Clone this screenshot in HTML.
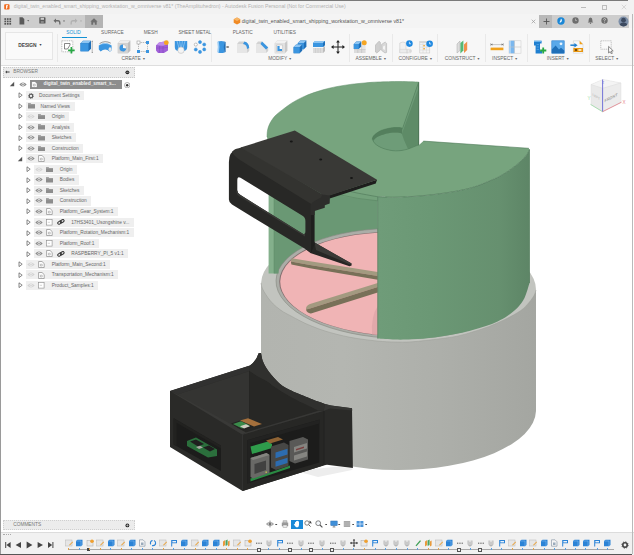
<!DOCTYPE html>
<html><head><meta charset="utf-8"><title>Fusion</title>
<style>
html,body{margin:0;padding:0;}
body{width:634px;height:555px;overflow:hidden;background:#fff;position:relative;font-family:"Liberation Sans",sans-serif;}
.ab{position:absolute;display:block;}
.t{position:absolute;white-space:nowrap;line-height:1;}
.rbg{position:absolute;height:9.2px;background:#efefef;}
.rt{position:absolute;height:9.2px;line-height:10.4px;font-size:4.8px;color:#666;background:#efefef;padding:0 4.5px 0 2px;white-space:nowrap;}
.lbl{position:absolute;font-size:4.9px;color:#666;white-space:nowrap;line-height:6px;transform:translateX(-50%);}
.tab{position:absolute;font-size:4.8px;color:#666;white-space:nowrap;line-height:6px;top:29.5px;}
.sep{position:absolute;top:34px;height:28px;width:1px;background:#e9e9e9;}
</style></head><body>
<!-- window border -->
<div class="ab" style="left:0;top:0;width:634px;height:555px;background:#fff"></div>
<!-- title bar -->
<div class="ab" style="left:0;top:0;width:634px;height:14px;background:#f2f2f2"></div>
<div class="ab" style="left:0;top:0;width:628px;height:1px;background:#7a7a7a"></div>
<svg class="ab" style="left:4px;top:3.6px" width="6" height="6" viewBox="0 0 9 9"><rect x="0.3" y="0.3" width="8" height="8" rx="1.2" fill="#f26a1b"/><path d="M3 2H6V3.2H4.3V4.2H5.6V5.3H4.3V7H3Z" fill="#fff"/></svg>
<div class="t" style="left:13.8px;top:4.2px;font-size:5.2px;color:#b2b2b2">digital_twin_enabled_smart_shipping_workstation_w_omniverse v81* (TheAmplituhedron) - Autodesk Fusion Personal (Not for Commercial Use)</div>
<!-- window controls -->
<div class="ab" style="left:581px;top:6.6px;width:5px;height:0.6px;background:#bbb"></div>
<div class="ab" style="left:601.6px;top:4.6px;width:3.2px;height:3.2px;border:0.6px solid #bdbdbd"></div>
<svg class="ab" style="left:621px;top:4px" width="6" height="6" viewBox="0 0 6 6"><path d="M0.8 0.8L5.2 5.2M5.2 0.8L0.8 5.2" stroke="#c4c4c4" stroke-width="0.6"/></svg>
<!-- app bar -->
<div class="ab" style="left:0;top:14px;width:634px;height:14px;background:#f4f4f4"></div>
<div class="ab" style="left:0;top:14.5px;width:103px;height:13px;background:#cdcdcd"></div>
<div class="ab" style="left:85px;top:14.5px;width:18px;height:13px;background:#b4b4b4"></div>
<div class="ab" style="left:539.3px;top:15px;width:90px;height:12.5px;background:#cdcdcd"></div>
<div class="ab" style="left:539.3px;top:15px;width:13px;height:12.5px;background:#b9b9b9"></div>
<!-- app bar icons -->
<svg class="ab" style="left:3.5px;top:17.5px" width="8" height="7" viewBox="0 0 8 7"><g fill="#555"><rect x="0.4" y="0.2" width="1.7" height="1.7"/><rect x="2.9" y="0.2" width="1.7" height="1.7"/><rect x="5.4" y="0.2" width="1.7" height="1.7"/><rect x="0.4" y="2.6" width="1.7" height="1.7"/><rect x="2.9" y="2.6" width="1.7" height="1.7"/><rect x="5.4" y="2.6" width="1.7" height="1.7"/><rect x="0.4" y="5" width="1.7" height="1.7"/><rect x="2.9" y="5" width="1.7" height="1.7"/><rect x="5.4" y="5" width="1.7" height="1.7"/></g></svg>
<svg class="ab" style="left:18.5px;top:17px" width="12" height="8" viewBox="0 0 12 8"><path d="M0.5 0.3H3.5L5.3 2V7.5H0.5Z" fill="#5a5a5a"/><path d="M8.2 3L10.2 3L9.2 4.4Z" fill="#666"/></svg>
<svg class="ab" style="left:38.5px;top:17.3px" width="7" height="7" viewBox="0 0 7 7"><rect x="0.3" y="0.3" width="6.2" height="6.2" rx="0.6" fill="#5a5a5a"/><rect x="1.6" y="0.8" width="3.4" height="2" fill="#cdcdcd"/><rect x="1.8" y="4" width="3" height="2" fill="#888"/></svg>
<svg class="ab" style="left:52.5px;top:17.5px" width="14" height="7" viewBox="0 0 14 7"><path d="M0.5 2.8L3 0.5V2H5Q7.5 2 7.5 5V6.5H6.2V5Q6.2 3.6 5 3.6H3V5.1Z" fill="#6a6a6a"/><path d="M10 2.6H12L11 4Z" fill="#666"/></svg>
<svg class="ab" style="left:69.5px;top:17.5px" width="14" height="7" viewBox="0 0 14 7"><path d="M7.5 2.8L5 0.5V2H3Q0.5 2 0.5 5V6.5H1.8V5Q1.8 3.6 3 3.6H5V5.1Z" fill="#b0b0b0"/><path d="M10 2.6H12L11 4Z" fill="#aaa"/></svg>
<svg class="ab" style="left:90px;top:17.6px" width="8" height="7" viewBox="0 0 8 7"><path d="M4 0.3L7.6 3.4H6.7V6.7H4.8V4.4H3.2V6.7H1.3V3.4H0.4Z" fill="#6e6e6e"/></svg>
<!-- tab -->
<svg class="ab" style="left:232.5px;top:17.3px" width="8" height="8" viewBox="0 0 8 8"><path d="M4 0.4L7.3 2.2V5.8L4 7.6L0.7 5.8V2.2Z" fill="#f08a24"/><path d="M4 0.4L7.3 2.2L4 4L0.7 2.2Z" fill="#f7b566"/></svg>
<div class="t" style="left:241.7px;top:18.6px;font-size:5.29px;color:#555">digital_twin_enabled_smart_shipping_workstation_w_omniverse v81*</div>
<svg class="ab" style="left:531.2px;top:18.6px" width="5" height="5" viewBox="0 0 5 5"><path d="M0.7 0.7L4.3 4.3M4.3 0.7L0.7 4.3" stroke="#999" stroke-width="0.7"/></svg>
<svg class="ab" style="left:543.2px;top:17.5px" width="7" height="7" viewBox="0 0 7 7"><path d="M3.5 0.5V6.5M0.5 3.5H6.5" stroke="#555" stroke-width="0.9"/></svg>
<svg class="ab" style="left:557.3px;top:16.8px" width="8" height="8" viewBox="0 0 8 8"><circle cx="4" cy="4" r="3.7" fill="#1b87d6"/><path d="M4 1.5Q5.6 3 4.6 4.6Q3.6 6 2.4 5.2Q3.6 4 4 1.5Z" fill="#fff"/></svg>
<svg class="ab" style="left:572px;top:17.3px" width="7" height="7" viewBox="0 0 7 7"><circle cx="3.5" cy="3.5" r="3.2" fill="#6e6e6e"/><path d="M3.5 1.6V3.6H5" stroke="#ccc" stroke-width="0.6" fill="none"/></svg>
<svg class="ab" style="left:586.5px;top:17.3px" width="7" height="7" viewBox="0 0 7 7"><path d="M3.5 0.5Q5.4 0.8 5.4 3.2V4.6L6.3 5.6H0.7L1.6 4.6V3.2Q1.6 0.8 3.5 0.5Z" fill="#6e6e6e"/><circle cx="3.5" cy="6.2" r="0.7" fill="#6e6e6e"/></svg>
<svg class="ab" style="left:600.8px;top:17.3px" width="7" height="7" viewBox="0 0 7 7"><circle cx="3.5" cy="3.5" r="3.2" fill="#6e6e6e"/><path d="M2.5 2.6Q2.6 1.6 3.5 1.6Q4.5 1.6 4.5 2.5Q4.5 3.2 3.5 3.6V4.3" stroke="#ddd" stroke-width="0.7" fill="none"/><circle cx="3.5" cy="5.3" r="0.45" fill="#ddd"/></svg>
<svg class="ab" style="left:617.5px;top:15.8px" width="11" height="11" viewBox="0 0 11 11"><defs><clipPath id="av"><circle cx="5.5" cy="5.5" r="5"/></clipPath></defs><circle cx="5.5" cy="5.5" r="5" fill="#7d8fa8"/><g clip-path="url(#av)"><circle cx="5.5" cy="4.2" r="2.4" fill="#3c4a60"/><path d="M1 11Q1.5 6.6 5.5 6.6Q9.5 6.6 10 11Z" fill="#3c4a60"/></g></svg>
<!-- toolbar -->
<div class="ab" style="left:0;top:28px;width:634px;height:37.5px;background:#f7f7f7"></div>
<div class="ab" style="left:0;top:65px;width:634px;height:1px;background:#dedede"></div>
<div class="ab" style="left:5px;top:32px;width:48px;height:28px;background:#fafafa;border:0.5px solid #e6e6e6;box-sizing:border-box"></div>
<div class="t" style="left:18.3px;top:43.6px;font-size:4.9px;color:#444;font-weight:bold;letter-spacing:-0.1px">DESIGN <span style="font-size:3.5px;position:relative;top:-0.5px;left:1px">&#9660;</span></div>
<div class="tab" style="left:66.3px;color:#1492d4">SOLID</div>
<div class="ab" style="left:61.5px;top:36.5px;width:25px;height:1.2px;background:#1492d4"></div>
<div class="tab" style="left:101px">SURFACE</div>
<div class="tab" style="left:143.8px">MESH</div>
<div class="tab" style="left:178.4px">SHEET METAL</div>
<div class="tab" style="left:232.7px">PLASTIC</div>
<div class="tab" style="left:273.6px">UTILITIES</div>
<svg class="ab" style="left:61.0px;top:39.8px" width="14" height="14" viewBox="0 0 14 14"><rect x="0.8" y="0.8" width="11" height="11" fill="#fff" stroke="#888" stroke-width="0.6" stroke-dasharray="1 0.8"/><path d="M3.5 9V3.5H9L9 5L6.5 9Z" fill="none" stroke="#555" stroke-width="0.7"/><path d="M10.4 7V13.6M7.1 10.3H13.7" stroke="#27a844" stroke-width="1.7"/></svg>
<svg class="ab" style="left:79.0px;top:39.8px" width="14" height="14" viewBox="0 0 14 14"><path d="M1.5 3.3L4.0 0.8H12.0V8.8L9.5 11.3H1.5Z" fill="#1f6fb8"/><path d="M1.5 3.3L4.0 0.8H12.0L9.5 3.3Z" fill="#8cc4f2"/><path d="M1.5 3.3H9.5V11.3H1.5Z" fill="#3a95e0"/><path d="M13.2 1V12.5" stroke="#777" stroke-width="0.5"/><path d="M12.6 1.6L13.2 0.6L13.8 1.6ZM12.6 12L13.2 13L13.8 12Z" fill="#555"/></svg>
<svg class="ab" style="left:98.3px;top:39.8px" width="14" height="14" viewBox="0 0 14 14"><path d="M0.8 5.5Q7 0.5 13.6 5.5V10Q13.4 11.6 11.6 11.4Q7 7.6 2.6 11.6L0.8 9.6Z" fill="#3a95e0"/><path d="M0.8 5.5Q7 0.5 13.6 5.5Q7 2.6 0.8 5.5Z" fill="#9ccdf5"/><path d="M1.5 3.6Q7 0 12.8 3.2" fill="none" stroke="#555" stroke-width="0.6"/><ellipse cx="12" cy="9.2" rx="1.4" ry="1.9" fill="#e8e8e8"/></svg>
<svg class="ab" style="left:117.0px;top:39.8px" width="14" height="14" viewBox="0 0 14 14"><path d="M0.8 3.1L3.3 0.6H13.4V10.7L10.9 13.2H0.8Z" fill="#bdbdbd"/><path d="M0.8 3.1L3.3 0.6H13.4L10.9 3.1Z" fill="#ededed"/><path d="M0.8 3.1H10.9V13.2H0.8Z" fill="#d4d4d4"/><circle cx="6" cy="8" r="3.6" fill="#f6f6f6" stroke="#aaa" stroke-width="0.5"/><path d="M6 4.6A3.4 3.4 0 1 0 9.3 8.6L6 8Z" fill="#3a95e0"/></svg>
<svg class="ab" style="left:135.6px;top:39.8px" width="14" height="14" viewBox="0 0 14 14"><path d="M2.5 2.5H11.5V11.5H2.5Z" fill="none" stroke="#888" stroke-width="0.6" stroke-dasharray="1.2 0.9"/><rect x="1" y="1" width="3" height="3" fill="#fff" stroke="#888" stroke-width="0.5"/><rect x="10" y="1" width="3" height="3" fill="#3a95e0"/><rect x="1" y="10" width="3" height="3" fill="#3a95e0"/><rect x="10" y="10" width="3" height="3" fill="#3a95e0"/></svg>
<svg class="ab" style="left:155.0px;top:39.8px" width="14" height="14" viewBox="0 0 14 14"><path d="M1 5.5L4 2.5L9.5 1.5L13 4.5V10.5L9 13H3L1 10.5Z" fill="#a060d8"/><path d="M1 5.5L4 2.5L9.5 1.5L13 4.5L8 6.2Z" fill="#c08cec"/><path d="M8 6.2V13M1 5.5L8 6.2L13 4.5M4.5 6V12.8M1 8H8L13 7.2" stroke="#7a3fb8" stroke-width="0.4" fill="none"/><circle cx="11.3" cy="2.7" r="2.4" fill="#f5a623"/></svg>
<svg class="ab" style="left:174.0px;top:39.8px" width="14" height="14" viewBox="0 0 14 14"><path d="M0.8 1H13.2V7Q13.2 10.5 10 11H4Q0.8 10.5 0.8 7Z" fill="#3a95e0"/><path d="M3 1L5 8M5.6 1L6.4 7M8.4 1L7.6 7M11 1L9 8" stroke="#9ccdf5" stroke-width="0.7"/><ellipse cx="7" cy="10.2" rx="3.2" ry="3.2" fill="#f4f4f4" stroke="#b5b5b5" stroke-width="0.5"/></svg>
<svg class="ab" style="left:192.6px;top:39.8px" width="14" height="14" viewBox="0 0 14 14"><circle cx="7.0" cy="2.1" r="1.55" fill="#3a95e0" stroke="#3a95e0" stroke-width="0.5"/><circle cx="11.2" cy="4.5" r="1.55" fill="#3a95e0" stroke="#3a95e0" stroke-width="0.5"/><circle cx="11.2" cy="9.4" r="1.55" fill="#3a95e0" stroke="#3a95e0" stroke-width="0.5"/><circle cx="7.0" cy="11.9" r="1.55" fill="#3a95e0" stroke="#3a95e0" stroke-width="0.5"/><circle cx="2.8" cy="9.5" r="1.55" fill="#3a95e0" stroke="#3a95e0" stroke-width="0.5"/><circle cx="2.8" cy="4.6" r="1.55" fill="#fff" stroke="#888" stroke-width="0.5"/></svg>
<svg class="ab" style="left:215.8px;top:39.8px" width="14" height="14" viewBox="0 0 14 14"><path d="M2 1.5Q5 0.5 8.5 1.5V12.5Q5 13.5 2 12.5Z" fill="#3a95e0"/><path d="M2 1.5Q3.2 7 2 12.5" fill="none" stroke="#9ccdf5" stroke-width="1.6"/><path d="M8.5 1.5Q7 7 8.5 12.5L9.6 12V2Z" fill="#1f6fb8"/><path d="M10 7H12" stroke="#333" stroke-width="0.7"/><path d="M11.6 5.9L13.2 7L11.6 8.1Z" fill="#333"/></svg>
<svg class="ab" style="left:236.0px;top:39.8px" width="14" height="14" viewBox="0 0 14 14"><path d="M1 4L3 1.5H8Q13 2.5 13.2 8V11L11 13H1Z" fill="#d2d2d2"/><path d="M1 4H7Q11 4.6 11 9V13H1Z" fill="#e6e6e6"/><path d="M7 4L8.5 1.5Q13 2.5 13.2 8L11 9Q11 4.6 7 4Z" fill="#3a95e0"/></svg>
<svg class="ab" style="left:255.0px;top:39.8px" width="14" height="14" viewBox="0 0 14 14"><path d="M1 4L3 1.5H7L13.2 7.5V11L11 13H1Z" fill="#d2d2d2"/><path d="M1 4H5.5L11 9.5V13H1Z" fill="#e6e6e6"/><path d="M5.5 4L7 1.5L13.2 7.5L11 9.5Z" fill="#3a95e0"/></svg>
<svg class="ab" style="left:273.8px;top:39.8px" width="14" height="14" viewBox="0 0 14 14"><path d="M0.8 3.1L3.3 0.6H13.4V10.7L10.9 13.2H0.8Z" fill="#c9c9c9"/><path d="M0.8 3.1L3.3 0.6H13.4L10.9 3.1Z" fill="#f2f2f2"/><path d="M0.8 3.1H10.9V13.2H0.8Z" fill="#e2e2e2"/><path d="M2.6 5H8.6V11.6H2.6Z" fill="#fafafa" stroke="#aaa" stroke-width="0.4"/><path d="M3.4 6V11H8V9H5.6V6Z" fill="#3a95e0"/></svg>
<svg class="ab" style="left:292.7px;top:39.8px" width="14" height="14" viewBox="0 0 14 14"><path d="M4.8 3.1L7.3 0.6H13.399999999999999V6.699999999999999L10.899999999999999 9.2H4.8Z" fill="#1f6fb8"/><path d="M4.8 3.1L7.3 0.6H13.399999999999999L10.899999999999999 3.1Z" fill="#8cc4f2"/><path d="M4.8 3.1H10.899999999999999V9.2H4.8Z" fill="#3a95e0"/><path d="M0.6 7.1L3.1 4.6H9.2V10.7L6.699999999999999 13.2H0.6Z" fill="#1f6fb8"/><path d="M0.6 7.1L3.1 4.6H9.2L6.699999999999999 7.1Z" fill="#8cc4f2"/><path d="M0.6 7.1H6.699999999999999V13.2H0.6Z" fill="#3a95e0"/></svg>
<svg class="ab" style="left:311.7px;top:39.8px" width="14" height="14" viewBox="0 0 14 14"><path d="M1 3L3 1H13V5L11 7H1Z" fill="#3a95e0"/><path d="M1 3L3 1H13L11 3Z" fill="#8cc4f2"/><path d="M11 3L13 1V5L11 7Z" fill="#1f6fb8"/><path d="M1 8H11L13 6V11L11 13H1Z" fill="#dcdcdc"/><path d="M11 8L13 6V11L11 13Z" fill="#bdbdbd"/><path d="M3.5 8V13M6 8V13M8.5 8V13" stroke="#c4c4c4" stroke-width="0.5"/></svg>
<svg class="ab" style="left:330.6px;top:39.8px" width="14" height="14" viewBox="0 0 14 14"><path d="M7 1.6V12.4M1.6 7H12.4" stroke="#222" stroke-width="1"/><path d="M7 0L8.9 2.6H5.1ZM7 14L8.9 11.4H5.1ZM0 7L2.6 5.1V8.9ZM14 7L11.4 5.1V8.9Z" fill="#222"/></svg>
<svg class="ab" style="left:353.3px;top:39.8px" width="14" height="14" viewBox="0 0 14 14"><path d="M0.8 4.0L3.3 1.5H8.3V6.5L5.800000000000001 9.0H0.8Z" fill="#1f6fb8"/><path d="M0.8 4.0L3.3 1.5H8.3L5.800000000000001 4.0Z" fill="#8cc4f2"/><path d="M0.8 4.0H5.800000000000001V9.0H0.8Z" fill="#3a95e0"/><path d="M1 9.5H12.6V13H1Z" fill="#dcdcdc"/><path d="M8.6 4.5H12.6V9.5H8.6Z" fill="#e6e6e6"/><path d="M1 9.5H12.6M8.6 4.5V13M4.8 9.5V13" stroke="#b9b9b9" stroke-width="0.5"/><circle cx="11.2" cy="2.7" r="2.5" fill="#f5a623"/></svg>
<svg class="ab" style="left:373.5px;top:39.8px" width="14" height="14" viewBox="0 0 14 14"><path d="M1.5 5L5 1.2L6.4 2.4V10L2.8 13L1.5 12Z" fill="#cfcfcf" stroke="#a9a9a9" stroke-width="0.5"/><path d="M7.6 4.4L11.2 2L12.6 3.4V12.4L11 13L7.6 10.4Z" fill="#d8d8d8" stroke="#a9a9a9" stroke-width="0.5"/><path d="M9 6.5L11 5.5V10L9 9Z" fill="#f4f4f4"/></svg>
<svg class="ab" style="left:399.0px;top:39.8px" width="14" height="14" viewBox="0 0 14 14"><path d="M0.8 3Q4 1 7 3V12.6H0.8Z" fill="#f1f1f1" stroke="#c4c4c4" stroke-width="0.5"/><path d="M0.8 9.4H12V12.8H0.8Z" fill="#ececec" stroke="#c9c9c9" stroke-width="0.4"/><path d="M8 9.4V13.6M10 11H13" stroke="#bbb" stroke-width="0.5"/><circle cx="10.4" cy="3.6" r="3.3" fill="#1e88e0"/><path d="M10.4 1.8V3.8H12" stroke="#fff" stroke-width="0.7" fill="none"/></svg>
<svg class="ab" style="left:419.0px;top:39.8px" width="14" height="14" viewBox="0 0 14 14"><rect x="0.8" y="1.6" width="10" height="11.4" fill="#f4f4f4" stroke="#c4c4c4" stroke-width="0.5"/><path d="M0.8 4.4H10.8M0.8 7.2H10.8M0.8 10H10.8M4 1.6V13M7.4 1.6V13" stroke="#d2d2d2" stroke-width="0.5"/><rect x="0.8" y="1.6" width="10" height="1.4" fill="#d8d8d8"/><rect x="4.4" y="5" width="1.4" height="1.4" fill="#f5a623"/><rect x="4.4" y="8" width="1.4" height="1.4" fill="#f5a623"/><circle cx="10.6" cy="3.8" r="3.3" fill="#1e88e0"/><path d="M10.6 2V4H12.2" stroke="#fff" stroke-width="0.7" fill="none"/></svg>
<svg class="ab" style="left:455.3px;top:39.8px" width="14" height="14" viewBox="0 0 14 14"><path d="M2 4L5 1V10.4L2 13Z" fill="#ddd" stroke="#a9a9a9" stroke-width="0.5"/><path d="M5.4 3L8.4 0.6V10.6L5.4 13.4Z" fill="#55b873"/><path d="M9 4.4L12.2 1.6V10L9 13Z" fill="#f0914a"/></svg>
<svg class="ab" style="left:489.7px;top:39.8px" width="14" height="14" viewBox="0 0 14 14"><path d="M0.6 4.6H13.4" stroke="#999" stroke-width="0.5"/><path d="M0.6 3V6.2M13.4 3V6.2" stroke="#999" stroke-width="0.5"/><path d="M0.8 4.6L2.4 3.6V5.6ZM13.2 4.6L11.6 3.6V5.6Z" fill="#666"/><rect x="0.6" y="7.6" width="12.8" height="2.6" fill="#f0a11c"/></svg>
<svg class="ab" style="left:508.0px;top:39.8px" width="14" height="14" viewBox="0 0 14 14"><rect x="1" y="0.8" width="12" height="12.4" fill="#f7f7f7" stroke="#c9c9c9" stroke-width="0.5"/><rect x="1" y="0.8" width="5.4" height="12.4" fill="#a9d0f3"/><rect x="3" y="0.8" width="3.4" height="12.4" fill="#7ab7ee"/><path d="M6.4 0.8V13.2M1 7H13" stroke="#c2c2c2" stroke-width="0.6"/></svg>
<svg class="ab" style="left:533.4px;top:39.8px" width="14" height="14" viewBox="0 0 14 14"><path d="M1 0.8H8.6V3.4H7V11H9V13.4H2.6V5.4H1Z" fill="#1f7fd0"/><path d="M1 0.8H8.6V2H1Z" fill="#6bb3ec"/><path d="M3.6 4.6H6M3.6 7H6M3.6 9.4H6" stroke="#6bb3ec" stroke-width="0.6"/><path d="M10.2 7.4V13.6M7.1 10.5H13.3" stroke="#27a844" stroke-width="1.8"/></svg>
<svg class="ab" style="left:551.2px;top:39.8px" width="14" height="14" viewBox="0 0 14 14"><rect x="0.8" y="0.8" width="12.4" height="12.4" fill="#5aa9ea"/><rect x="0.8" y="0.8" width="12.4" height="12.4" fill="none" stroke="#2a7fce" stroke-width="0.6"/><path d="M0.8 13.2V9.4L4.6 5.6L8 9.6L10 7.8L13.2 10.6V13.2Z" fill="#1f6fb8"/><circle cx="10" cy="3.8" r="1.4" fill="#eaf4fd"/></svg>
<svg class="ab" style="left:570.0px;top:39.8px" width="14" height="14" viewBox="0 0 14 14"><path d="M3.4 0.8H9.6L13 4.2V13.2H3.4Z" fill="#f7f7f7" stroke="#c9c9c9" stroke-width="0.5"/><path d="M9.6 0.8L13 4.2H9.6Z" fill="#f0a11c"/><rect x="3.4" y="8" width="9.6" height="4" fill="#e8960f"/><rect x="5" y="9" width="2" height="2" fill="#7a4b06"/><rect x="8.4" y="9" width="3" height="2" fill="#fbe2b4"/><path d="M0.4 5.2H5" stroke="#1f7fd0" stroke-width="1.5"/><path d="M4.4 2.9L7.6 5.2L4.4 7.5Z" fill="#1f7fd0"/></svg>
<svg class="ab" style="left:599.5px;top:39.8px" width="14" height="14" viewBox="0 0 14 14"><rect x="0.8" y="0.8" width="10.4" height="8.4" fill="#fafafa" stroke="#8d8d8d" stroke-width="0.55" stroke-dasharray="1.1 0.8"/><path d="M8.6 6.4V13L10.2 11.6L11.3 13.8L12.3 13.3L11.2 11.1L13.2 10.9Z" fill="#fff" stroke="#333" stroke-width="0.55"/></svg>
<div class="lbl" style="left:133.5px;top:55.5px">CREATE <span style="font-size:3.4px">&#9660;</span></div>
<div class="lbl" style="left:280px;top:55.5px">MODIFY <span style="font-size:3.4px">&#9660;</span></div>
<div class="lbl" style="left:371px;top:55.5px">ASSEMBLE <span style="font-size:3.4px">&#9660;</span></div>
<div class="lbl" style="left:415.5px;top:55.5px">CONFIGURE <span style="font-size:3.4px">&#9660;</span></div>
<div class="lbl" style="left:462.5px;top:55.5px">CONSTRUCT <span style="font-size:3.4px">&#9660;</span></div>
<div class="lbl" style="left:505px;top:55.5px">INSPECT <span style="font-size:3.4px">&#9660;</span></div>
<div class="lbl" style="left:558px;top:55.5px">INSERT <span style="font-size:3.4px">&#9660;</span></div>
<div class="lbl" style="left:607px;top:55.5px">SELECT <span style="font-size:3.4px">&#9660;</span></div>
<div class="sep" style="left:57px"></div>
<div class="sep" style="left:211px"></div>
<div class="sep" style="left:349px"></div>
<div class="sep" style="left:392px"></div>
<div class="sep" style="left:437px"></div>
<div class="sep" style="left:484.5px"></div>
<div class="sep" style="left:527px"></div>
<div class="sep" style="left:589px"></div>
<!-- canvas model -->
<svg class="ab" style="left:0;top:66px" width="634" height="466" viewBox="0 66 634 466">
<defs><linearGradient id="gw" x1="378" x2="530" y1="0" y2="0" gradientUnits="userSpaceOnUse"><stop offset="0" stop-color="#6f9c79"/><stop offset="0.35" stop-color="#6b9875"/><stop offset="0.8" stop-color="#66906f"/><stop offset="1" stop-color="#5d8566"/></linearGradient><linearGradient id="gg" x1="261" x2="536" y1="0" y2="0" gradientUnits="userSpaceOnUse"><stop offset="0" stop-color="#b2b4af"/><stop offset="0.3" stop-color="#b4b6b1"/><stop offset="0.65" stop-color="#adafaa"/><stop offset="1" stop-color="#a4a6a1"/></linearGradient><clipPath id="inner"><path d="M276 140H377.7V345H276Z"/></clipPath></defs>
<path d="M296 471L338 466.5L353 468.6L352 470L318 477Z" fill="#ededed"/>
<ellipse cx="398.5" cy="286.5" rx="137.5" ry="57" transform="rotate(1.4 398.5 286.5)" fill="#c2c4bf"/>
<path d="M261 283C261.2 283.9 261.6 286.6 262.4 288.5C263.2 290.4 264.4 292.4 265.8 294.5C267.2 296.6 268.7 298.9 270.5 301.0C272.3 303.1 274.4 305.2 276.6 307.0C278.8 308.8 281.1 310.5 283.5 312.0C285.9 313.5 288.2 314.5 291.0 316.0C293.8 317.5 297.0 319.3 300.0 320.8C303.0 322.3 304.8 323.3 309.0 325.0C313.2 326.7 318.2 328.9 325.0 331.0C331.8 333.1 341.3 335.6 350.0 337.3C358.7 339.0 369.5 340.2 377.0 341.0C384.5 341.8 389.2 341.9 395.0 342.0C400.8 342.1 404.5 342.3 412.0 341.8C419.5 341.3 432.3 339.8 440.0 338.8C447.7 337.8 452.3 337.2 458.0 336.0C463.7 334.8 468.9 333.1 474.0 331.5C479.1 329.9 483.3 328.7 488.5 326.7C493.7 324.7 499.6 322.2 505.0 319.5C510.4 316.8 516.8 313.3 520.8 310.5C524.8 307.7 526.8 305.0 529.0 302.5C531.2 300.0 532.8 297.6 534.0 295.5C535.2 293.4 535.7 290.9 536.0 290.0V411A137.5 60 0 0 1 261 409Z" fill="url(#gg)"/>
<path d="M261 283C261.2 283.9 261.6 286.6 262.4 288.5C263.2 290.4 264.4 292.4 265.8 294.5C267.2 296.6 268.7 298.9 270.5 301.0C272.3 303.1 274.4 305.2 276.6 307.0C278.8 308.8 281.1 310.5 283.5 312.0C285.9 313.5 288.2 314.5 291.0 316.0C293.8 317.5 297.0 319.3 300.0 320.8C303.0 322.3 304.8 323.3 309.0 325.0C313.2 326.7 318.2 328.9 325.0 331.0C331.8 333.1 341.3 335.6 350.0 337.3C358.7 339.0 369.5 340.2 377.0 341.0C384.5 341.8 389.2 341.9 395.0 342.0C400.8 342.1 404.5 342.3 412.0 341.8C419.5 341.3 432.3 339.8 440.0 338.8C447.7 337.8 452.3 337.2 458.0 336.0C463.7 334.8 468.9 333.1 474.0 331.5C479.1 329.9 483.3 328.7 488.5 326.7C493.7 324.7 499.6 322.2 505.0 319.5C510.4 316.8 516.8 313.3 520.8 310.5C524.8 307.7 526.8 305.0 529.0 302.5C531.2 300.0 532.8 297.6 534.0 295.5C535.2 293.4 535.7 290.9 536.0 290.0" stroke="#9a9c97" stroke-width="0.5" fill="none"/>
<path d="M274 146H377.7V290H279.4V273.4H274Z" fill="#6a9874"/>
<path d="M330 185L377.7 190V200.8Q360 199.4 343.8 196.4L330 192Z" fill="#73a17b"/>
<path d="M336 194Q358 199.2 377.7 200.8" stroke="#56805f" stroke-width="0.5" fill="none"/>
<ellipse cx="399" cy="283.5" rx="123" ry="55" transform="rotate(1.4 399 283.5)" fill="#abada7" stroke="#85877f" stroke-width="0.6"/>
<ellipse cx="399" cy="284" rx="119.8" ry="52.3" transform="rotate(1.4 399 284)" fill="#857070"/>
<ellipse cx="399.6" cy="284.2" rx="119.4" ry="52" transform="rotate(1.4 399.6 284.2)" fill="#f0b4b5"/>
<path d="M377.7 306Q371 316 372 334.6L377.7 335Z" fill="#d9a0a4" opacity="0.6"/>
<path d="M291.6 258.2L310.0 261.3L377.7 272.1L377.7 276.0L310.0 265.0L290.8 261.6Z" fill="#a39a80" />
<path d="M290.8 261.6L310.0 265.0L377.7 276.0L377.7 279.7L310.0 268.2L291.4 264.6Z" fill="#787058" />
<path d="M306 309.6Q305.6 305.6 310 304.1L377.7 283V287L310 308.5Z" fill="#a39a80"/>
<path d="M306 309.6L310 308.5L377.7 287V292.6L311 313.4Q307 313.6 306 309.6Z" fill="#787058"/>
<path d="M274 146V273.2L278.6 273.4L278.6 150Z" fill="#6a9874"/>
<path d="M268.6 137V273.6L274 273.4V146Z" fill="#84b08c"/>
<path d="M274 146V273.4" stroke="#5d8a66" stroke-width="0.5" fill="none"/>
<path d="M377.7 196.7V338.6C380.6 338.8 389.3 339.5 395.0 339.6C400.7 339.7 405.3 339.7 412.0 339.3C418.7 338.9 427.3 338.3 435.0 337.4C442.7 336.4 451.7 334.8 458.0 333.6C464.3 332.4 468.0 331.4 472.7 330.1C477.4 328.8 481.9 327.4 486.0 326.0C490.1 324.6 493.9 323.1 497.6 321.4C501.3 319.6 504.7 317.8 508.0 315.5C511.3 313.2 514.8 310.6 517.5 307.7C520.2 304.8 522.5 302.1 524.5 298.0C526.5 293.9 528.7 285.5 529.5 283.0V149.5C529.0 150.4 528.1 152.9 526.5 155.0C524.9 157.1 522.5 159.7 520.0 162.0C517.5 164.3 514.3 166.7 511.3 168.9C508.3 171.1 505.4 173.1 502.0 175.0C498.6 176.9 496.3 178.2 491.1 180.3C485.9 182.5 478.6 185.8 471.0 187.9C463.4 190.0 454.1 191.6 445.7 192.9C437.3 194.2 428.9 195.2 420.5 195.9C412.1 196.6 402.3 197.1 395.2 197.2C388.1 197.3 380.6 196.8 377.7 196.7Z" fill="url(#gw)"/>
<path d="M529.5 149.5V283" stroke="#4f7a59" stroke-width="0.7" fill="none"/>
<path d="M377.7 197V338.6" stroke="#4c7656" stroke-width="0.6" fill="none"/>
<path d="M267.0 137.0C267.1 135.8 267.1 132.2 267.6 130.0C268.1 127.8 268.6 125.9 269.8 123.6C271.0 121.3 272.9 118.3 275.0 116.0C277.1 113.7 279.6 112.0 282.3 109.9C285.1 107.8 288.2 105.3 291.5 103.2C294.8 101.1 298.4 99.2 302.2 97.4C305.9 95.6 309.8 94.0 314.0 92.6C318.2 91.1 323.0 89.8 327.2 88.7C331.4 87.6 334.9 87.0 339.0 86.2C343.1 85.5 347.7 84.8 352.0 84.2C356.3 83.7 360.7 83.3 365.0 82.9C369.3 82.5 372.2 82.2 378.0 82.0C383.8 81.8 393.2 81.5 400.0 81.5C406.8 81.5 415.6 81.9 418.7 82.0L418.7 145.2L423.4 141.1L528.8 148.3L529.5 149.5C529.0 150.4 528.1 152.9 526.5 155.0C524.9 157.1 522.5 159.7 520.0 162.0C517.5 164.3 514.3 166.7 511.3 168.9C508.3 171.1 505.4 173.1 502.0 175.0C498.6 176.9 496.3 178.2 491.1 180.3C485.9 182.5 478.6 185.8 471.0 187.9C463.4 190.0 454.1 191.6 445.7 192.9C437.3 194.2 428.9 195.2 420.5 195.9C412.1 196.6 402.3 197.1 395.2 197.2C388.1 197.3 380.6 196.8 377.7 196.7C376.4 196.5 374.2 196.2 370.0 195.4C365.8 194.6 358.4 193.4 352.6 192.0C346.8 190.6 340.8 189.0 335.0 187.0C329.2 185.0 323.8 182.8 318.0 180.0C312.2 177.2 305.2 173.3 300.0 170.0C294.8 166.7 291.0 163.3 287.0 160.0C283.0 156.7 279.1 153.0 276.0 150.0C272.9 147.0 270.1 144.2 268.6 142.0C267.1 139.8 267.3 137.8 267.0 137.0Z" fill="#77a47e"/>
<path d="M529.5 149.5C529.0 150.4 528.1 152.9 526.5 155.0C524.9 157.1 522.5 159.7 520.0 162.0C517.5 164.3 514.3 166.7 511.3 168.9C508.3 171.1 505.4 173.1 502.0 175.0C498.6 176.9 496.3 178.2 491.1 180.3C485.9 182.5 478.6 185.8 471.0 187.9C463.4 190.0 454.1 191.6 445.7 192.9C437.3 194.2 428.9 195.2 420.5 195.9C412.1 196.6 402.3 197.1 395.2 197.2C388.1 197.3 380.6 196.8 377.7 196.7" stroke="#4e7657" stroke-width="0.7" fill="none"/>
<path d="M340 188.5C342.1 189.1 347.6 190.8 352.6 192.0C357.6 193.2 365.8 194.6 370.0 195.4C374.2 196.2 376.4 196.5 377.7 196.7" stroke="#4e7657" stroke-width="0.6" fill="none"/>
<path d="M423.4 141.1L528.8 148.3" stroke="#4f7a59" stroke-width="0.6" fill="none"/>
<path d="M372.2 139.1C372.4 138.6 372.8 136.9 373.5 136.0C374.2 135.1 375.1 134.2 376.2 133.4C377.3 132.6 378.6 131.7 380.0 131.0C381.4 130.3 382.2 130.0 384.3 129.4C386.4 128.8 389.8 128.0 392.5 127.7C395.2 127.4 398.9 127.6 400.6 127.7C402.3 127.8 402.2 128.4 402.5 128.5L418.4 82.8L418.7 82.0L418.7 145.2C418.4 145.3 418.5 145.0 416.8 145.6C415.1 146.2 411.2 148.0 408.7 148.8C406.2 149.6 404.2 150.1 402.0 150.4C399.8 150.8 397.7 150.9 395.7 150.9C393.7 150.9 391.9 150.5 390.0 150.2C388.1 149.8 386.1 149.4 384.3 148.8C382.5 148.2 380.6 147.4 379.0 146.5C377.4 145.6 375.7 144.4 374.6 143.2C373.5 142.0 372.6 139.8 372.2 139.1Z" fill="#5e8b67"/>
<path d="M373.8 139.9C374.5 139.3 376.2 137.6 378.0 136.6C379.8 135.6 381.9 134.9 384.3 134.2C386.7 133.5 390.2 132.9 392.5 132.6C394.8 132.3 396.4 132.4 398.0 132.6C399.6 132.8 401.2 133.5 401.9 133.7L404.0 140.0L408.0 148.9C407.0 149.2 404.1 150.1 402.0 150.4C399.9 150.7 397.7 150.9 395.7 150.9C393.7 150.9 391.9 150.5 390.0 150.2C388.1 149.8 386.1 149.4 384.3 148.8C382.5 148.2 380.6 147.4 379.0 146.5C377.4 145.6 375.5 144.3 374.6 143.2C373.7 142.1 373.9 140.4 373.8 139.9Z" fill="#6e9c78"/>
<path d="M372.2 139.1C372.4 138.6 372.8 136.9 373.5 136.0C374.2 135.1 375.1 134.2 376.2 133.4C377.3 132.6 378.6 131.7 380.0 131.0C381.4 130.3 382.2 130.0 384.3 129.4C386.4 128.8 389.8 128.0 392.5 127.7C395.2 127.4 398.9 127.6 400.6 127.7C402.3 127.8 402.2 128.4 402.5 128.5L401.9 133.7C401.2 133.5 399.6 132.8 398.0 132.6C396.4 132.4 394.8 132.3 392.5 132.6C390.2 132.9 386.7 133.5 384.3 134.2C381.9 134.9 379.8 135.6 378.0 136.6C376.2 137.6 374.5 139.3 373.8 139.9Z" fill="#547f5d"/>
<path d="M418.4 82.8L402.5 128.5L401.9 133.7L418.4 88.5Z" fill="#6d9a76" />
<path d="M418.7 82V145.2" stroke="#3f6548" stroke-width="0.8" fill="none"/>
<path d="M418.4 82.8L402.5 128.5" stroke="#4f7a59" stroke-width="0.5" fill="none"/>
<path d="M372.2 139.1C372.4 138.6 372.8 136.9 373.5 136.0C374.2 135.1 375.1 134.2 376.2 133.4C377.3 132.6 378.6 131.7 380.0 131.0C381.4 130.3 382.2 130.0 384.3 129.4C386.4 128.8 389.8 128.0 392.5 127.7C395.2 127.4 398.9 127.6 400.6 127.7C402.3 127.8 402.2 128.4 402.5 128.5" stroke="#4f7a59" stroke-width="0.5" fill="none"/>
<path d="M372.2 139.1C372.6 139.8 373.5 142.0 374.6 143.2C375.7 144.4 377.4 145.6 379.0 146.5C380.6 147.4 382.5 148.2 384.3 148.8C386.1 149.4 388.1 149.8 390.0 150.2C391.9 150.5 393.7 150.9 395.7 150.9C397.7 150.9 399.8 150.8 402.0 150.4C404.2 150.1 406.2 149.6 408.7 148.8C411.2 148.0 415.1 146.2 416.8 145.6C418.5 145.0 418.4 145.3 418.7 145.2" stroke="#4f7a59" stroke-width="0.5" fill="none"/>
<path d="M267.0 137.0C267.1 135.8 267.1 132.2 267.6 130.0C268.1 127.8 268.6 125.9 269.8 123.6C271.0 121.3 272.9 118.3 275.0 116.0C277.1 113.7 279.6 112.0 282.3 109.9C285.1 107.8 288.2 105.3 291.5 103.2C294.8 101.1 298.4 99.2 302.2 97.4C305.9 95.6 309.8 94.0 314.0 92.6C318.2 91.1 323.0 89.8 327.2 88.7C331.4 87.6 334.9 87.0 339.0 86.2C343.1 85.5 347.7 84.8 352.0 84.2C356.3 83.7 360.7 83.3 365.0 82.9C369.3 82.5 372.2 82.2 378.0 82.0C383.8 81.8 393.2 81.5 400.0 81.5C406.8 81.5 415.6 81.9 418.7 82.0" stroke="#5f8c68" stroke-width="0.5" fill="none"/>
<path d="M305.4 249.0L311.0 240.0L315.9 243.3L351.6 263.6L351.6 265.4L349.5 266.2L311.0 253.2Z" fill="#262624" />
<path d="M314.6 242.5L351.6 263.6L350.0 264.4L316.0 250.0Z" fill="#3a3a37" />
<path d="M236 149.6Q228.9 152 228.9 162V199.5Q228.9 202.6 232 204.6L306.2 249.6L311 253.2V212L321 197.3L240 149.5ZM240.5 177.8L302.1 215.6Q305.4 217.6 305.4 221V231Q305.4 235.4 302.4 233.5L240.5 195.1Q237.3 193.2 237.3 190.5V180.5Q237.3 176 240.5 177.8Z" fill="#282826" fill-rule="evenodd"/>
<path d="M237.3 190.5Q237.3 193.2 240.5 195.1L302.4 233.5Q304 234.5 305 233.6L305 236.4L239.6 196.6Q236.4 194.6 236.4 191Z" fill="#3b3b38"/>
<path d="M311.0 212.0L314.6 208.0L314.6 244.0L311.0 253.2Z" fill="#1f1f1e" />
<path d="M310.5 205.0L312.0 199.0L321.0 193.5L330.0 194.5L329.7 203.6L324.8 205.3L324.8 207.7L314.6 210.9L314.6 215.0L310.5 215.0Z" fill="#2d2d2b" />
<path d="M329.7 195.0L377.0 179.8L375.8 183.6L329.7 198.6Z" fill="#1e1e1d" />
<path d="M232 152Q234 149 238.7 148.2L243 147L322.5 194.5L321 197.6L314.5 201Q312.5 202 311.2 204L240 160Q234 156 232 152Z" fill="#333330"/>
<path d="M240.5 147.6L294.8 130.5L377.0 179.8L329.7 195.4L322.3 194.6Z" fill="#393936" />
<ellipse cx="291.3" cy="141.5" rx="1.5" ry="1" fill="#161615"/>
<ellipse cx="320.7" cy="159.6" rx="1.5" ry="1" fill="#161615"/>
<ellipse cx="351.5" cy="178" rx="1.5" ry="1" fill="#161615"/>
<path d="M170 390.9L250 365.5Q256 361.5 258.6 353.2L261 353C261.3 354.2 261.8 358.1 262.6 360.5C263.4 362.9 264.6 365.1 266.0 367.5C267.4 369.9 269.6 372.5 271.3 374.7C273.1 376.9 274.7 378.7 276.5 380.5C278.3 382.3 280.1 384.1 282.3 385.7C284.6 387.3 287.4 388.7 290.0 390.0C292.6 391.3 294.0 391.9 298.0 393.6C302.0 395.3 309.4 398.3 313.9 400.0C318.4 401.7 323.1 403.3 325.0 404.0Q328 404.6 331 405.6L352 408.2L352.9 468L327 464.8L323.5 465.5L242.6 490.9L170 447Z" fill="#2a2a28"/>
<path d="M325 404Q328 404.6 331 405.6L352 408.2L352.3 410.6L330 408.4L323.5 411Z" fill="#363634"/>
<path d="M323.8 411V465" stroke="#1d1d1c" stroke-width="0.8"/>
<path d="M177.0 394.6L249.5 371.0L249.5 425.0L241.0 431.5Z" fill="#343432" />
<path d="M249.5 371.0C250.8 371.8 254.2 374.3 257.0 376.0C259.8 377.7 263.7 379.2 266.5 381.0C269.3 382.8 271.4 384.7 274.0 386.5C276.6 388.3 279.6 390.3 282.3 392.0C285.0 393.7 287.4 395.1 290.0 396.5C292.6 397.9 295.0 399.2 298.0 400.7C301.0 402.2 304.7 403.9 308.0 405.5C311.3 407.1 316.3 409.6 318.0 410.4L246 432L241 431.5L249.5 425Z" fill="#272725"/>
<path d="M249.5 371V421" stroke="#222220" stroke-width="0.6"/>
<path d="M231.0 423.5L240.0 420.5L262.0 424.0L246.0 429.5L241.0 430.5Z" fill="#232321" />
<path d="M233.0 424.0L241.0 421.3L250.0 425.5L242.0 428.6Z" fill="#3a8a4a" />
<path d="M240.0 420.5L248.0 418.2L262.0 424.0L254.0 426.6Z" fill="#a5703c" />
<path d="M240.0 426.2L246.0 424.2L250.0 426.3L244.0 428.6Z" fill="#cfcdc2" />
<path d="M173.7 418.3L221.0 445.7L221.0 471.0L173.7 444.4Z" fill="#1c1c1b" />
<path d="M173.7 418.3L221.0 445.7L221.0 448.5L176.5 422.8L176.5 446.0L173.7 444.4Z" fill="#222220" />
<path d="M187.0 441.0L196.0 437.5L217.0 449.5L217.0 456.0L208.0 457.5L187.0 446.0Z" fill="#2b6f3c" />
<path d="M190.0 441.5L196.0 439.5L204.0 444.0L198.0 446.4Z" fill="#1f1f1e" />
<path d="M203.0 447.5L209.0 445.5L215.0 449.0L210.0 451.5Z" fill="#1f1f1e" />
<path d="M196.0 447.0L200.0 445.8L203.0 447.6L199.0 449.0Z" fill="#a9a9a2" />
<path d="M242.6 434.7L323.5 411.0L323.5 465.5L242.6 490.9Z" fill="#272725" />
<path d="M247.2 440.2L319.3 419.7L319.3 462.6L247.2 483.6Z" fill="#1c1c1b" />
<path d="M247.2 440.2L319.3 419.7L319.3 423.5L250.5 443.0L250.5 482.6L247.2 483.6Z" fill="#222221" />
<path d="M250.5 446.5L268.0 441.5L272.0 444.0L272.0 448.0L252.0 454.0Z" fill="#2f9c4b" />
<path d="M266.0 440.5L278.0 437.0L283.0 439.5L270.0 443.5Z" fill="#8f6334" />
<path d="M250.5 478.5L276.0 470.5L290.0 465.5L290.0 468.0L256.0 479.5L250.5 481.5Z" fill="#2a8a43" />
<path d="M250.5 458.0L266.5 453.0L269.5 455.0L269.5 473.0L253.0 478.5L250.5 477.0Z" fill="#696966" />
<path d="M250.5 458.0L266.5 453.0L269.5 455.0L253.0 460.0Z" fill="#84847f" />
<path d="M254.5 464.0L266.0 460.5L266.0 470.0L254.5 474.0Z" fill="#414140" />
<path d="M271.0 446.5L284.0 442.5L288.5 445.0L288.5 466.0L276.0 470.0L271.0 467.5Z" fill="#474745" />
<path d="M275.5 452.5L287.5 448.8L287.5 454.5L275.5 458.3Z" fill="#2c6cb0" />
<path d="M275.5 461.5L287.5 457.8L287.5 463.0L275.5 466.8Z" fill="#2c6cb0" />
<path d="M289.5 441.0L303.0 437.0L308.0 439.5L308.0 459.5L295.0 463.5L289.5 461.0Z" fill="#595957" />
<path d="M294.0 447.0L307.0 443.0L307.0 448.5L294.0 452.6Z" fill="#858581" />
<path d="M294.0 455.5L307.0 451.5L307.0 456.5L294.0 460.5Z" fill="#858581" />
<path d="M296.0 449.0L304.0 446.6L304.0 448.0L296.0 450.5Z" fill="#7a3f3f" />
<rect x="265.5" y="471.5" width="1.4" height="1.4" fill="#c9c94a"/>
<path d="M170.0 390.9L250.0 365.5L249.5 371.0L177.4 394.6Z" fill="#313130" />
<path d="M170.0 390.9L177.4 394.6L246.0 432.4L242.6 434.7Z" fill="#393937" />
<path d="M242.6 434.7L323.5 411.0L318.0 411.0L246.0 432.4Z" fill="#383836" />
<path d="M250 365.5Q256 361.5 258.6 353.2L261 353C261.3 354.2 261.8 358.1 262.6 360.5C263.4 362.9 264.6 365.1 266.0 367.5C267.4 369.9 269.6 372.5 271.3 374.7C273.1 376.9 274.7 378.7 276.5 380.5C278.3 382.3 280.1 384.1 282.3 385.7C284.6 387.3 287.4 388.7 290.0 390.0C292.6 391.3 294.0 391.9 298.0 393.6C302.0 395.3 309.4 398.3 313.9 400.0C318.4 401.7 323.1 403.3 325.0 404.0L323.5 411L318 410.4C316.3 409.6 311.3 407.1 308.0 405.5C304.7 403.9 301.0 402.2 298.0 400.7C295.0 399.2 292.6 397.9 290.0 396.5C287.4 395.1 285.0 393.7 282.3 392.0C279.6 390.3 276.6 388.3 274.0 386.5C271.4 384.7 269.3 382.8 266.5 381.0C263.7 379.2 259.8 377.7 257.0 376.0C254.2 374.3 250.8 371.8 249.5 371.0Z" fill="#30302e"/>
<path d="M242.6 435V490.5" stroke="#3a3a38" stroke-width="0.7"/>
</svg>
<svg class="ab" style="left:584px;top:74px" width="46" height="42" viewBox="584 74 46 42"><path d="M591 84.5L603 79.4L621 83L621 102.4L602.6 111.7L591 104.6Z" fill="#efefef"/><path d="M591 84.5L603 79.4L621 83L602.6 88.4Z" fill="#f4f4f4" stroke="#dcdcdc" stroke-width="0.4"/><path d="M591 84.5L602.6 88.4V111.7L591 104.6Z" fill="#e9e9e9" stroke="#dcdcdc" stroke-width="0.4"/><path d="M602.6 88.4L621 83V102.4L602.6 111.7Z" fill="#ececec" stroke="#dcdcdc" stroke-width="0.4"/><text font-size="4.2" fill="#a2a2a2" font-family="Liberation Sans,sans-serif" font-weight="bold" transform="matrix(0.89 -0.45 0 1 604.6 102.4)">FRONT</text><text font-size="3.4" fill="#bcbcbc" font-family="Liberation Sans,sans-serif" font-weight="bold" transform="matrix(0.85 0.52 0 1 592.6 95.6)">LEFT</text><path d="M602.6 79.5V111.7" stroke="#6868d6" stroke-width="0.9"/><path d="M602.6 111.7L621.5 102.2" stroke="#e0707a" stroke-width="0.7"/><path d="M602.6 111.7L590.5 104.4" stroke="#8fd69a" stroke-width="0.7"/><text x="622.6" y="103.6" font-size="4.6" fill="#e88a92" font-family="Liberation Sans,sans-serif">X</text><text x="587.4" y="100" font-size="4.6" fill="#a5dfae" font-family="Liberation Sans,sans-serif">Y</text><text x="602" y="83.5" font-size="3.4" fill="#7a7ad8" font-family="Liberation Sans,sans-serif">Z</text></svg>
<!-- browser -->
<div class="ab" style="left:2.5px;top:66.5px;width:132px;height:11px;background:#ebebeb;border:0.5px dotted #c8c8c8;box-sizing:border-box"></div>
<svg class="ab" style="left:5px;top:70px" width="5" height="4" viewBox="0 0 5 4"><path d="M0.2 2L2 0.6V3.4Z" fill="#444"/><path d="M2 2H4.6" stroke="#444" stroke-width="1"/></svg>
<div class="t" style="left:13.2px;top:69.8px;font-size:4.8px;color:#7a7a7a">BROWSER</div>
<svg class="ab" style="left:125px;top:70px" width="5" height="5" viewBox="0 0 5 5"><circle cx="2.4" cy="2.3" r="1.9" fill="#222"/><path d="M1.2 2.3H3.6" stroke="#ddd" stroke-width="0.6"/></svg>
<!-- root row -->
<svg class="ab" style="left:9px;top:81.3px" width="6" height="6" viewBox="0 0 6 6"><path d="M5.2 0.8V5.2H0.8Z" fill="#555"/></svg>
<svg class="ab" style="left:19px;top:81.9px" width="8" height="5.2" viewBox="0 0 8 5.2"><path d="M0.3 2.6Q4 -1.4 7.7 2.6Q4 6.6 0.3 2.6Z" fill="#8a8a8a"/><circle cx="4" cy="2.6" r="1.5" fill="#f0f0f0"/><circle cx="4" cy="2.6" r="0.8" fill="#8a8a8a"/></svg>
<div class="ab" style="left:29.6px;top:80.2px;width:92.3px;height:8.8px;background:#8d8d8d"></div>
<svg class="ab" style="left:31px;top:81.2px" width="7" height="7" viewBox="0 0 7 7"><path d="M0.6 0.5H4L6.2 2.6V6.5H0.6Z" fill="#fff" stroke="#666" stroke-width="0.5"/><path d="M2.4 3.2H4.2V5H2.4Z" fill="none" stroke="#888" stroke-width="0.5"/></svg>
<div class="t" style="left:43.5px;top:82.2px;font-size:4.8px;color:#f2f2f2;font-weight:bold">digital_twin_enabled_smart_s...</div>
<svg class="ab" style="left:124px;top:81.5px" width="6.4" height="6.4" viewBox="0 0 6.4 6.4"><circle cx="3.2" cy="3.2" r="2.7" fill="#fff" stroke="#666" stroke-width="0.5"/><circle cx="3.2" cy="3.2" r="1.2" fill="#333"/></svg>
<svg class="ab" style="left:17.5px;top:92.35px" width="6" height="6.4" viewBox="0 0 6 6.4"><path d="M1 0.8L4.2 3.2L1 5.6Z" fill="#fff" stroke="#555" stroke-width="0.7"/></svg>
<div class="rbg" style="left:25.5px;top:90.95px;width:13.5px"></div>
<svg class="ab" style="left:27.9px;top:92.55px" width="6" height="6" viewBox="0 0 6 6"><circle cx="3" cy="3" r="1.8" fill="none" stroke="#5a5a5a" stroke-width="1.3"/><circle cx="3" cy="3" r="2.6" fill="none" stroke="#5a5a5a" stroke-width="0.6" stroke-dasharray="0.9 1.1"/></svg>
<div class="rt" style="left:37.0px;top:90.95px">Document Settings</div>
<svg class="ab" style="left:17.5px;top:102.89999999999999px" width="6" height="6.4" viewBox="0 0 6 6.4"><path d="M1 0.8L4.2 3.2L1 5.6Z" fill="#fff" stroke="#555" stroke-width="0.7"/></svg>
<div class="rbg" style="left:25.5px;top:101.5px;width:15.0px"></div>
<svg class="ab" style="left:27.7px;top:103.3px" width="7" height="5.6" viewBox="0 0 7 5.6"><path d="M0 0.3H2.6L3.2 1H7V5.6H0Z" fill="#8c8c8c"/><path d="M0 1.6H7" stroke="#b5b5b5" stroke-width="0.4"/></svg>
<div class="rt" style="left:38.5px;top:101.5px">Named Views</div>
<svg class="ab" style="left:17.5px;top:113.45px" width="6" height="6.4" viewBox="0 0 6 6.4"><path d="M1 0.8L4.2 3.2L1 5.6Z" fill="#fff" stroke="#555" stroke-width="0.7"/></svg>
<div class="rbg" style="left:25.5px;top:112.05000000000001px;width:26.200000000000003px"></div>
<svg class="ab" style="left:26.5px;top:114.05000000000001px" width="8" height="5.2" viewBox="0 0 8 5.2"><path d="M0.3 2.6Q4 -1.4 7.7 2.6Q4 6.6 0.3 2.6Z" fill="#d2d2d2"/><circle cx="4" cy="2.6" r="1.5" fill="#f0f0f0"/><circle cx="4" cy="2.6" r="0.8" fill="#d2d2d2"/></svg>
<svg class="ab" style="left:38.2px;top:113.85000000000001px" width="7" height="5.6" viewBox="0 0 7 5.6"><path d="M0 0.3H2.6L3.2 1H7V5.6H0Z" fill="#8c8c8c"/><path d="M0 1.6H7" stroke="#b5b5b5" stroke-width="0.4"/></svg>
<div class="rt" style="left:49.7px;top:112.05000000000001px">Origin</div>
<svg class="ab" style="left:17.5px;top:124.0px" width="6" height="6.4" viewBox="0 0 6 6.4"><path d="M1 0.8L4.2 3.2L1 5.6Z" fill="#fff" stroke="#555" stroke-width="0.7"/></svg>
<div class="rbg" style="left:25.5px;top:122.60000000000001px;width:26.200000000000003px"></div>
<svg class="ab" style="left:26.5px;top:124.60000000000001px" width="8" height="5.2" viewBox="0 0 8 5.2"><path d="M0.3 2.6Q4 -1.4 7.7 2.6Q4 6.6 0.3 2.6Z" fill="#8a8a8a"/><circle cx="4" cy="2.6" r="1.5" fill="#f0f0f0"/><circle cx="4" cy="2.6" r="0.8" fill="#8a8a8a"/></svg>
<svg class="ab" style="left:38.2px;top:124.4px" width="7" height="5.6" viewBox="0 0 7 5.6"><path d="M0 0.3H2.6L3.2 1H7V5.6H0Z" fill="#8c8c8c"/><path d="M0 1.6H7" stroke="#b5b5b5" stroke-width="0.4"/></svg>
<div class="rt" style="left:49.7px;top:122.60000000000001px">Analysis</div>
<svg class="ab" style="left:17.5px;top:134.55px" width="6" height="6.4" viewBox="0 0 6 6.4"><path d="M1 0.8L4.2 3.2L1 5.6Z" fill="#fff" stroke="#555" stroke-width="0.7"/></svg>
<div class="rbg" style="left:25.5px;top:133.15px;width:26.200000000000003px"></div>
<svg class="ab" style="left:26.5px;top:135.15px" width="8" height="5.2" viewBox="0 0 8 5.2"><path d="M0.3 2.6Q4 -1.4 7.7 2.6Q4 6.6 0.3 2.6Z" fill="#8a8a8a"/><circle cx="4" cy="2.6" r="1.5" fill="#f0f0f0"/><circle cx="4" cy="2.6" r="0.8" fill="#8a8a8a"/></svg>
<svg class="ab" style="left:38.2px;top:134.95px" width="7" height="5.6" viewBox="0 0 7 5.6"><path d="M0 0.3H2.6L3.2 1H7V5.6H0Z" fill="#8c8c8c"/><path d="M0 1.6H7" stroke="#b5b5b5" stroke-width="0.4"/></svg>
<div class="rt" style="left:49.7px;top:133.15px">Sketches</div>
<svg class="ab" style="left:17.5px;top:145.10000000000002px" width="6" height="6.4" viewBox="0 0 6 6.4"><path d="M1 0.8L4.2 3.2L1 5.6Z" fill="#fff" stroke="#555" stroke-width="0.7"/></svg>
<div class="rbg" style="left:25.5px;top:143.70000000000002px;width:26.200000000000003px"></div>
<svg class="ab" style="left:26.5px;top:145.70000000000002px" width="8" height="5.2" viewBox="0 0 8 5.2"><path d="M0.3 2.6Q4 -1.4 7.7 2.6Q4 6.6 0.3 2.6Z" fill="#8a8a8a"/><circle cx="4" cy="2.6" r="1.5" fill="#f0f0f0"/><circle cx="4" cy="2.6" r="0.8" fill="#8a8a8a"/></svg>
<svg class="ab" style="left:38.2px;top:145.5px" width="7" height="5.6" viewBox="0 0 7 5.6"><path d="M0 0.3H2.6L3.2 1H7V5.6H0Z" fill="#8c8c8c"/><path d="M0 1.6H7" stroke="#b5b5b5" stroke-width="0.4"/></svg>
<div class="rt" style="left:49.7px;top:143.70000000000002px">Construction</div>
<svg class="ab" style="left:17px;top:155.65000000000003px" width="6" height="6" viewBox="0 0 6 6"><path d="M5.2 0.8V5.2H0.8Z" fill="#555"/></svg>
<div class="rbg" style="left:25.5px;top:154.25000000000003px;width:26.200000000000003px"></div>
<svg class="ab" style="left:26.5px;top:156.25000000000003px" width="8" height="5.2" viewBox="0 0 8 5.2"><path d="M0.3 2.6Q4 -1.4 7.7 2.6Q4 6.6 0.3 2.6Z" fill="#8a8a8a"/><circle cx="4" cy="2.6" r="1.5" fill="#f0f0f0"/><circle cx="4" cy="2.6" r="0.8" fill="#8a8a8a"/></svg>
<svg class="ab" style="left:38.400000000000006px;top:155.45000000000002px" width="7" height="7" viewBox="0 0 7 7"><path d="M0.6 0.5H4L6.2 2.6V6.5H0.6Z" fill="#fff" stroke="#777" stroke-width="0.6"/><path d="M2.4 3.2H4.2V5H2.4Z" fill="none" stroke="#888" stroke-width="0.5"/></svg>
<div class="rt" style="left:49.7px;top:154.25000000000003px">Platform_Main_First:1</div>
<svg class="ab" style="left:25.5px;top:166.20000000000002px" width="6" height="6.4" viewBox="0 0 6 6.4"><path d="M1 0.8L4.2 3.2L1 5.6Z" fill="#fff" stroke="#555" stroke-width="0.7"/></svg>
<div class="rbg" style="left:33.5px;top:164.8px;width:26.200000000000003px"></div>
<svg class="ab" style="left:34.5px;top:166.8px" width="8" height="5.2" viewBox="0 0 8 5.2"><path d="M0.3 2.6Q4 -1.4 7.7 2.6Q4 6.6 0.3 2.6Z" fill="#d2d2d2"/><circle cx="4" cy="2.6" r="1.5" fill="#f0f0f0"/><circle cx="4" cy="2.6" r="0.8" fill="#d2d2d2"/></svg>
<svg class="ab" style="left:46.2px;top:166.6px" width="7" height="5.6" viewBox="0 0 7 5.6"><path d="M0 0.3H2.6L3.2 1H7V5.6H0Z" fill="#8c8c8c"/><path d="M0 1.6H7" stroke="#b5b5b5" stroke-width="0.4"/></svg>
<div class="rt" style="left:57.7px;top:164.8px">Origin</div>
<svg class="ab" style="left:25.5px;top:176.75px" width="6" height="6.4" viewBox="0 0 6 6.4"><path d="M1 0.8L4.2 3.2L1 5.6Z" fill="#fff" stroke="#555" stroke-width="0.7"/></svg>
<div class="rbg" style="left:33.5px;top:175.35px;width:26.200000000000003px"></div>
<svg class="ab" style="left:34.5px;top:177.35px" width="8" height="5.2" viewBox="0 0 8 5.2"><path d="M0.3 2.6Q4 -1.4 7.7 2.6Q4 6.6 0.3 2.6Z" fill="#8a8a8a"/><circle cx="4" cy="2.6" r="1.5" fill="#f0f0f0"/><circle cx="4" cy="2.6" r="0.8" fill="#8a8a8a"/></svg>
<svg class="ab" style="left:46.2px;top:177.14999999999998px" width="7" height="5.6" viewBox="0 0 7 5.6"><path d="M0 0.3H2.6L3.2 1H7V5.6H0Z" fill="#8c8c8c"/><path d="M0 1.6H7" stroke="#b5b5b5" stroke-width="0.4"/></svg>
<div class="rt" style="left:57.7px;top:175.35px">Bodies</div>
<svg class="ab" style="left:25.5px;top:187.3px" width="6" height="6.4" viewBox="0 0 6 6.4"><path d="M1 0.8L4.2 3.2L1 5.6Z" fill="#fff" stroke="#555" stroke-width="0.7"/></svg>
<div class="rbg" style="left:33.5px;top:185.9px;width:26.200000000000003px"></div>
<svg class="ab" style="left:34.5px;top:187.9px" width="8" height="5.2" viewBox="0 0 8 5.2"><path d="M0.3 2.6Q4 -1.4 7.7 2.6Q4 6.6 0.3 2.6Z" fill="#8a8a8a"/><circle cx="4" cy="2.6" r="1.5" fill="#f0f0f0"/><circle cx="4" cy="2.6" r="0.8" fill="#8a8a8a"/></svg>
<svg class="ab" style="left:46.2px;top:187.7px" width="7" height="5.6" viewBox="0 0 7 5.6"><path d="M0 0.3H2.6L3.2 1H7V5.6H0Z" fill="#8c8c8c"/><path d="M0 1.6H7" stroke="#b5b5b5" stroke-width="0.4"/></svg>
<div class="rt" style="left:57.7px;top:185.9px">Sketches</div>
<svg class="ab" style="left:25.5px;top:197.85000000000002px" width="6" height="6.4" viewBox="0 0 6 6.4"><path d="M1 0.8L4.2 3.2L1 5.6Z" fill="#fff" stroke="#555" stroke-width="0.7"/></svg>
<div class="rbg" style="left:33.5px;top:196.45000000000002px;width:26.200000000000003px"></div>
<svg class="ab" style="left:34.5px;top:198.45000000000002px" width="8" height="5.2" viewBox="0 0 8 5.2"><path d="M0.3 2.6Q4 -1.4 7.7 2.6Q4 6.6 0.3 2.6Z" fill="#8a8a8a"/><circle cx="4" cy="2.6" r="1.5" fill="#f0f0f0"/><circle cx="4" cy="2.6" r="0.8" fill="#8a8a8a"/></svg>
<svg class="ab" style="left:46.2px;top:198.25px" width="7" height="5.6" viewBox="0 0 7 5.6"><path d="M0 0.3H2.6L3.2 1H7V5.6H0Z" fill="#8c8c8c"/><path d="M0 1.6H7" stroke="#b5b5b5" stroke-width="0.4"/></svg>
<div class="rt" style="left:57.7px;top:196.45000000000002px">Construction</div>
<svg class="ab" style="left:25.5px;top:208.40000000000003px" width="6" height="6.4" viewBox="0 0 6 6.4"><path d="M1 0.8L4.2 3.2L1 5.6Z" fill="#fff" stroke="#555" stroke-width="0.7"/></svg>
<div class="rbg" style="left:33.5px;top:207.00000000000003px;width:26.200000000000003px"></div>
<svg class="ab" style="left:34.5px;top:209.00000000000003px" width="8" height="5.2" viewBox="0 0 8 5.2"><path d="M0.3 2.6Q4 -1.4 7.7 2.6Q4 6.6 0.3 2.6Z" fill="#8a8a8a"/><circle cx="4" cy="2.6" r="1.5" fill="#f0f0f0"/><circle cx="4" cy="2.6" r="0.8" fill="#8a8a8a"/></svg>
<svg class="ab" style="left:46.400000000000006px;top:208.20000000000002px" width="7" height="7" viewBox="0 0 7 7"><path d="M0.6 0.5H4L6.2 2.6V6.5H0.6Z" fill="#fff" stroke="#777" stroke-width="0.6"/><path d="M2.4 3.2H4.2V5H2.4Z" fill="none" stroke="#888" stroke-width="0.5"/></svg>
<div class="rt" style="left:57.7px;top:207.00000000000003px">Platform_Gear_System:1</div>
<svg class="ab" style="left:25.5px;top:218.95000000000002px" width="6" height="6.4" viewBox="0 0 6 6.4"><path d="M1 0.8L4.2 3.2L1 5.6Z" fill="#fff" stroke="#555" stroke-width="0.7"/></svg>
<div class="rbg" style="left:33.5px;top:217.55px;width:37.7px"></div>
<svg class="ab" style="left:34.5px;top:219.55px" width="8" height="5.2" viewBox="0 0 8 5.2"><path d="M0.3 2.6Q4 -1.4 7.7 2.6Q4 6.6 0.3 2.6Z" fill="#8a8a8a"/><circle cx="4" cy="2.6" r="1.5" fill="#f0f0f0"/><circle cx="4" cy="2.6" r="0.8" fill="#8a8a8a"/></svg>
<svg class="ab" style="left:46.400000000000006px;top:218.95000000000002px" width="7" height="6.6" viewBox="0 0 7 6.6"><rect x="0.5" y="0.5" width="5.6" height="5.6" fill="#fff" stroke="#888" stroke-width="0.6"/><path d="M1.8 3.3H4" stroke="#aaa" stroke-width="0.5"/></svg>
<svg class="ab" style="left:56.7px;top:219.15px" width="8" height="6" viewBox="0 0 8 6"><g fill="none" stroke="#333" stroke-width="1"><rect x="0.6" y="2.4" width="4" height="2.4" rx="1.2" transform="rotate(-35 2.6 3.6)"/><rect x="3.2" y="1" width="4" height="2.4" rx="1.2" transform="rotate(-35 5.2 2.2)"/></g></svg>
<div class="rt" style="left:69.2px;top:217.55px">17HS3401_Usongshine v...</div>
<svg class="ab" style="left:25.5px;top:229.50000000000003px" width="6" height="6.4" viewBox="0 0 6 6.4"><path d="M1 0.8L4.2 3.2L1 5.6Z" fill="#fff" stroke="#555" stroke-width="0.7"/></svg>
<div class="rbg" style="left:33.5px;top:228.10000000000002px;width:26.200000000000003px"></div>
<svg class="ab" style="left:34.5px;top:230.10000000000002px" width="8" height="5.2" viewBox="0 0 8 5.2"><path d="M0.3 2.6Q4 -1.4 7.7 2.6Q4 6.6 0.3 2.6Z" fill="#8a8a8a"/><circle cx="4" cy="2.6" r="1.5" fill="#f0f0f0"/><circle cx="4" cy="2.6" r="0.8" fill="#8a8a8a"/></svg>
<svg class="ab" style="left:46.400000000000006px;top:229.3px" width="7" height="7" viewBox="0 0 7 7"><path d="M0.6 0.5H4L6.2 2.6V6.5H0.6Z" fill="#fff" stroke="#777" stroke-width="0.6"/><path d="M2.4 3.2H4.2V5H2.4Z" fill="none" stroke="#888" stroke-width="0.5"/></svg>
<div class="rt" style="left:57.7px;top:228.10000000000002px">Platform_Rotation_Mechanism:1</div>
<svg class="ab" style="left:25.5px;top:240.05px" width="6" height="6.4" viewBox="0 0 6 6.4"><path d="M1 0.8L4.2 3.2L1 5.6Z" fill="#fff" stroke="#555" stroke-width="0.7"/></svg>
<div class="rbg" style="left:33.5px;top:238.65px;width:26.200000000000003px"></div>
<svg class="ab" style="left:34.5px;top:240.65px" width="8" height="5.2" viewBox="0 0 8 5.2"><path d="M0.3 2.6Q4 -1.4 7.7 2.6Q4 6.6 0.3 2.6Z" fill="#8a8a8a"/><circle cx="4" cy="2.6" r="1.5" fill="#f0f0f0"/><circle cx="4" cy="2.6" r="0.8" fill="#8a8a8a"/></svg>
<svg class="ab" style="left:46.400000000000006px;top:240.05px" width="7" height="6.6" viewBox="0 0 7 6.6"><rect x="0.5" y="0.5" width="5.6" height="5.6" fill="#fff" stroke="#888" stroke-width="0.6"/><path d="M1.8 3.3H4" stroke="#aaa" stroke-width="0.5"/></svg>
<div class="rt" style="left:57.7px;top:238.65px">Platform_Roof:1</div>
<svg class="ab" style="left:25.5px;top:250.60000000000002px" width="6" height="6.4" viewBox="0 0 6 6.4"><path d="M1 0.8L4.2 3.2L1 5.6Z" fill="#fff" stroke="#555" stroke-width="0.7"/></svg>
<div class="rbg" style="left:33.5px;top:249.20000000000002px;width:37.7px"></div>
<svg class="ab" style="left:34.5px;top:251.20000000000002px" width="8" height="5.2" viewBox="0 0 8 5.2"><path d="M0.3 2.6Q4 -1.4 7.7 2.6Q4 6.6 0.3 2.6Z" fill="#8a8a8a"/><circle cx="4" cy="2.6" r="1.5" fill="#f0f0f0"/><circle cx="4" cy="2.6" r="0.8" fill="#8a8a8a"/></svg>
<svg class="ab" style="left:46.400000000000006px;top:250.4px" width="7" height="7" viewBox="0 0 7 7"><path d="M0.6 0.5H4L6.2 2.6V6.5H0.6Z" fill="#fff" stroke="#777" stroke-width="0.6"/><path d="M2.4 3.2H4.2V5H2.4Z" fill="none" stroke="#888" stroke-width="0.5"/></svg>
<svg class="ab" style="left:56.7px;top:250.8px" width="8" height="6" viewBox="0 0 8 6"><g fill="none" stroke="#333" stroke-width="1"><rect x="0.6" y="2.4" width="4" height="2.4" rx="1.2" transform="rotate(-35 2.6 3.6)"/><rect x="3.2" y="1" width="4" height="2.4" rx="1.2" transform="rotate(-35 5.2 2.2)"/></g></svg>
<div class="rt" style="left:69.2px;top:249.20000000000002px">RASPBERRY_PI_5 v1:1</div>
<svg class="ab" style="left:17.5px;top:261.15000000000003px" width="6" height="6.4" viewBox="0 0 6 6.4"><path d="M1 0.8L4.2 3.2L1 5.6Z" fill="#fff" stroke="#555" stroke-width="0.7"/></svg>
<div class="rbg" style="left:25.5px;top:259.75px;width:26.200000000000003px"></div>
<svg class="ab" style="left:26.5px;top:261.75px" width="8" height="5.2" viewBox="0 0 8 5.2"><path d="M0.3 2.6Q4 -1.4 7.7 2.6Q4 6.6 0.3 2.6Z" fill="#d2d2d2"/><circle cx="4" cy="2.6" r="1.5" fill="#f0f0f0"/><circle cx="4" cy="2.6" r="0.8" fill="#d2d2d2"/></svg>
<svg class="ab" style="left:38.400000000000006px;top:260.95000000000005px" width="7" height="7" viewBox="0 0 7 7"><path d="M0.6 0.5H4L6.2 2.6V6.5H0.6Z" fill="#fff" stroke="#777" stroke-width="0.6"/><path d="M2.4 3.2H4.2V5H2.4Z" fill="none" stroke="#888" stroke-width="0.5"/></svg>
<div class="rt" style="left:49.7px;top:259.75px">Platform_Main_Second:1</div>
<svg class="ab" style="left:17.5px;top:271.7px" width="6" height="6.4" viewBox="0 0 6 6.4"><path d="M1 0.8L4.2 3.2L1 5.6Z" fill="#fff" stroke="#555" stroke-width="0.7"/></svg>
<div class="rbg" style="left:25.5px;top:270.29999999999995px;width:26.200000000000003px"></div>
<svg class="ab" style="left:26.5px;top:272.29999999999995px" width="8" height="5.2" viewBox="0 0 8 5.2"><path d="M0.3 2.6Q4 -1.4 7.7 2.6Q4 6.6 0.3 2.6Z" fill="#d2d2d2"/><circle cx="4" cy="2.6" r="1.5" fill="#f0f0f0"/><circle cx="4" cy="2.6" r="0.8" fill="#d2d2d2"/></svg>
<svg class="ab" style="left:38.400000000000006px;top:271.5px" width="7" height="7" viewBox="0 0 7 7"><path d="M0.6 0.5H4L6.2 2.6V6.5H0.6Z" fill="#fff" stroke="#777" stroke-width="0.6"/><path d="M2.4 3.2H4.2V5H2.4Z" fill="none" stroke="#888" stroke-width="0.5"/></svg>
<div class="rt" style="left:49.7px;top:270.29999999999995px">Transportation_Mechanism:1</div>
<svg class="ab" style="left:17.5px;top:282.25000000000006px" width="6" height="6.4" viewBox="0 0 6 6.4"><path d="M1 0.8L4.2 3.2L1 5.6Z" fill="#fff" stroke="#555" stroke-width="0.7"/></svg>
<div class="rbg" style="left:25.5px;top:280.85px;width:26.200000000000003px"></div>
<svg class="ab" style="left:26.5px;top:282.85px" width="8" height="5.2" viewBox="0 0 8 5.2"><path d="M0.3 2.6Q4 -1.4 7.7 2.6Q4 6.6 0.3 2.6Z" fill="#d2d2d2"/><circle cx="4" cy="2.6" r="1.5" fill="#f0f0f0"/><circle cx="4" cy="2.6" r="0.8" fill="#d2d2d2"/></svg>
<svg class="ab" style="left:38.400000000000006px;top:282.25000000000006px" width="7" height="6.6" viewBox="0 0 7 6.6"><rect x="0.5" y="0.5" width="5.6" height="5.6" fill="#fff" stroke="#888" stroke-width="0.6"/><path d="M1.8 3.3H4" stroke="#aaa" stroke-width="0.5"/></svg>
<div class="rt" style="left:49.7px;top:280.85px">Product_Samples:1</div>
<!-- comments -->
<div class="ab" style="left:2.5px;top:520px;width:132px;height:10.4px;background:#ececec;border:0.5px dotted #cfcfcf;box-sizing:border-box"></div>
<div class="t" style="left:13.2px;top:522.8px;font-size:4.8px;color:#777">COMMENTS</div>
<svg class="ab" style="left:124.6px;top:522.6px" width="5" height="5" viewBox="0 0 5 5"><circle cx="2.4" cy="2.4" r="1.9" fill="#222"/><path d="M1.2 2.4H3.6M2.4 1.2V3.6" stroke="#ddd" stroke-width="0.6"/></svg>
<!-- nav bar -->
<svg class="ab" style="left:265.8px;top:520.3px" width="8" height="8" viewBox="0 0 8 8"><path d="M4 0.6V7.4M0.6 4H7.4" stroke="#777" stroke-width="0.8"/><ellipse cx="4" cy="4" rx="3.2" ry="1.5" fill="none" stroke="#888" stroke-width="0.7"/><circle cx="4" cy="4" r="1" fill="#666"/></svg>
<svg class="ab" style="left:275.3px;top:523.5px" width="2.4" height="1.8" viewBox="0 0 2.4 1.8"><path d="M0 0H2.4L1.2 1.8Z" fill="#444"/></svg>
<svg class="ab" style="left:280.7px;top:520.3px" width="8" height="8" viewBox="0 0 8 8"><rect x="0.8" y="2.6" width="6.4" height="3.6" fill="#9a9a9a"/><rect x="2" y="0.8" width="4" height="2" fill="#c9c9c9" stroke="#888" stroke-width="0.4"/><rect x="2" y="5" width="4" height="2.4" fill="#eee" stroke="#888" stroke-width="0.4"/></svg>
<div class="ab" style="left:291.3px;top:519.6px;width:11.3px;height:9.8px;background:#1a8ad8"></div>
<svg class="ab" style="left:293.0px;top:520.3px" width="8" height="8" viewBox="0 0 8 8"><path d="M2 4.4V2.2Q2.5 1.6 3 2.2V1.2Q3.5 0.6 4 1.2V1Q4.5 0.4 5 1V1.6Q5.5 1 6 1.6V5Q6 7.4 4 7.4Q2.6 7.4 1.2 5L0.8 4Q1.4 3.6 2 4.4Z" fill="#fff"/></svg>
<svg class="ab" style="left:303.9px;top:520.3px" width="8" height="8" viewBox="0 0 8 8"><circle cx="3" cy="3" r="2.2" fill="none" stroke="#666" stroke-width="0.8"/><path d="M4.6 4.6L6.6 6.6" stroke="#666" stroke-width="1"/><path d="M5.6 0.6V3.4L6.4 2.8L7 4L7.5 3.7L6.9 2.6L7.8 2.4Z" fill="#333"/></svg>
<svg class="ab" style="left:315.0px;top:520.3px" width="8" height="8" viewBox="0 0 8 8"><circle cx="3.2" cy="3.2" r="2.4" fill="#f4f8fc" stroke="#666" stroke-width="0.8"/><path d="M5 5L7.4 7.4" stroke="#555" stroke-width="1.1"/></svg>
<svg class="ab" style="left:324.5px;top:523.5px" width="2.4" height="1.8" viewBox="0 0 2.4 1.8"><path d="M0 0H2.4L1.2 1.8Z" fill="#444"/></svg>
<svg class="ab" style="left:329.5px;top:520.3px" width="8" height="8" viewBox="0 0 8 8"><rect x="0.8" y="1" width="6.4" height="4.6" fill="#3f8fd8" stroke="#2a6fb5" stroke-width="0.5"/><path d="M2.6 7H5.4M4 5.6V7" stroke="#666" stroke-width="0.7"/></svg>
<svg class="ab" style="left:338.3px;top:523.5px" width="2.4" height="1.8" viewBox="0 0 2.4 1.8"><path d="M0 0H2.4L1.2 1.8Z" fill="#444"/></svg>
<svg class="ab" style="left:342.9px;top:520.3px" width="8" height="8" viewBox="0 0 8 8"><rect x="0.8" y="1" width="6.4" height="6" fill="#a9a9a9"/><path d="M0.8 3H7.2M0.8 5H7.2" stroke="#d5d5d5" stroke-width="0.4"/></svg>
<svg class="ab" style="left:351.8px;top:523.5px" width="2.4" height="1.8" viewBox="0 0 2.4 1.8"><path d="M0 0H2.4L1.2 1.8Z" fill="#444"/></svg>
<svg class="ab" style="left:356.2px;top:520.3px" width="8" height="8" viewBox="0 0 8 8"><rect x="0.6" y="1" width="6.8" height="6" fill="#4a94da"/><path d="M4 1V7M0.6 4H7.4" stroke="#e3eefa" stroke-width="0.7"/></svg>
<svg class="ab" style="left:365.1px;top:523.5px" width="2.4" height="1.8" viewBox="0 0 2.4 1.8"><path d="M0 0H2.4L1.2 1.8Z" fill="#444"/></svg>
<!-- timeline -->
<div class="ab" style="left:0;top:532px;width:634px;height:23px;background:#f1f1f1"></div>
<div class="ab" style="left:0;top:532px;width:634px;height:0.6px;background:#dcdcdc"></div>
<div class="ab" style="left:2.5px;top:533.6px;width:8px;height:1px;border-top:1px dotted #aaa"></div>
<svg class="ab" style="left:3px;top:541px" width="54" height="8" viewBox="0 0 54 8"><g fill="#444"><rect x="2.2" y="1" width="1" height="6"/><path d="M7.6 1V7L3.4 4Z"/><path d="M18 1V7L12.6 4Z"/><path d="M23.6 0.6V7.4L29.4 4Z"/><path d="M34.6 1V7L40 4Z"/><path d="M45 1V7L49.2 4Z"/><rect x="49.4" y="1" width="1" height="6"/></g></svg>
<div class="ab" style="left:68px;top:549.2px;width:546px;height:0.6px;background:#a8a8a8"></div>
<div class="ab" style="left:256.6px;top:548.2px;width:2.2px;height:2.2px;border:0.5px solid #555;background:#f1f1f1"></div>
<div class="ab" style="left:287.7px;top:548.2px;width:2.2px;height:2.2px;border:0.5px solid #555;background:#f1f1f1"></div>
<div class="ab" style="left:309.1px;top:548.2px;width:2.2px;height:2.2px;border:0.5px solid #555;background:#f1f1f1"></div>
<div class="ab" style="left:329.8px;top:548.2px;width:2.2px;height:2.2px;border:0.5px solid #555;background:#f1f1f1"></div>
<div class="ab" style="left:457.1px;top:548.2px;width:2.2px;height:2.2px;border:0.5px solid #555;background:#f1f1f1"></div>
<div class="ab" style="left:477.9px;top:548.2px;width:2.2px;height:2.2px;border:0.5px solid #555;background:#f1f1f1"></div>
<div class="ab" style="left:87.2px;top:548px;width:3px;height:3px;background:#444"></div>
<div class="ab" style="left:68.1px;top:548.4px;width:0.8px;height:1.6px;background:#e0a24a"></div>
<div class="ab" style="left:78.6px;top:548.4px;width:0.8px;height:1.6px;background:#5a9fe0"></div>
<div class="ab" style="left:89.2px;top:548.4px;width:0.8px;height:1.6px;background:#e0a24a"></div>
<div class="ab" style="left:99.7px;top:548.4px;width:0.8px;height:1.6px;background:#e0a24a"></div>
<div class="ab" style="left:110.2px;top:548.4px;width:0.8px;height:1.6px;background:#5a9fe0"></div>
<div class="ab" style="left:120.8px;top:548.4px;width:0.8px;height:1.6px;background:#e0a24a"></div>
<div class="ab" style="left:131.3px;top:548.4px;width:0.8px;height:1.6px;background:#5a9fe0"></div>
<div class="ab" style="left:141.8px;top:548.4px;width:0.8px;height:1.6px;background:#5a9fe0"></div>
<div class="ab" style="left:152.3px;top:548.4px;width:0.8px;height:1.6px;background:#5a9fe0"></div>
<div class="ab" style="left:162.9px;top:548.4px;width:0.8px;height:1.6px;background:#e0a24a"></div>
<div class="ab" style="left:173.4px;top:548.4px;width:0.8px;height:1.6px;background:#5a9fe0"></div>
<div class="ab" style="left:183.9px;top:548.4px;width:0.8px;height:1.6px;background:#5a9fe0"></div>
<div class="ab" style="left:194.5px;top:548.4px;width:0.8px;height:1.6px;background:#e0a24a"></div>
<div class="ab" style="left:205.0px;top:548.4px;width:0.8px;height:1.6px;background:#5a9fe0"></div>
<div class="ab" style="left:215.5px;top:548.4px;width:0.8px;height:1.6px;background:#5a9fe0"></div>
<div class="ab" style="left:226.0px;top:548.4px;width:0.8px;height:1.6px;background:#e0a24a"></div>
<div class="ab" style="left:236.6px;top:548.4px;width:0.8px;height:1.6px;background:#e0a24a"></div>
<div class="ab" style="left:247.1px;top:548.4px;width:0.8px;height:1.6px;background:#e0a24a"></div>
<div class="ab" style="left:268.4px;top:548.4px;width:0.8px;height:1.6px;background:#5a9fe0"></div>
<div class="ab" style="left:279.3px;top:548.4px;width:0.8px;height:1.6px;background:#5a9fe0"></div>
<div class="ab" style="left:300.6px;top:548.4px;width:0.8px;height:1.6px;background:#5a9fe0"></div>
<div class="ab" style="left:321.6px;top:548.4px;width:0.8px;height:1.6px;background:#5a9fe0"></div>
<div class="ab" style="left:342.7px;top:548.4px;width:0.8px;height:1.6px;background:#5a9fe0"></div>
<div class="ab" style="left:353.1px;top:548.4px;width:0.8px;height:1.6px;background:#5a9fe0"></div>
<div class="ab" style="left:363.6px;top:548.4px;width:0.8px;height:1.6px;background:#e0a24a"></div>
<div class="ab" style="left:374.6px;top:548.4px;width:0.8px;height:1.6px;background:#5a9fe0"></div>
<div class="ab" style="left:385.1px;top:548.4px;width:0.8px;height:1.6px;background:#5a9fe0"></div>
<div class="ab" style="left:395.6px;top:548.4px;width:0.8px;height:1.6px;background:#5a9fe0"></div>
<div class="ab" style="left:406.6px;top:548.4px;width:0.8px;height:1.6px;background:#5a9fe0"></div>
<div class="ab" style="left:417.2px;top:548.4px;width:0.8px;height:1.6px;background:#5a9fe0"></div>
<div class="ab" style="left:427.6px;top:548.4px;width:0.8px;height:1.6px;background:#e0a24a"></div>
<div class="ab" style="left:438.1px;top:548.4px;width:0.8px;height:1.6px;background:#e0a24a"></div>
<div class="ab" style="left:448.2px;top:548.4px;width:0.8px;height:1.6px;background:#5a9fe0"></div>
<div class="ab" style="left:469.6px;top:548.4px;width:0.8px;height:1.6px;background:#5a9fe0"></div>
<div class="ab" style="left:490.6px;top:548.4px;width:0.8px;height:1.6px;background:#5a9fe0"></div>
<div class="ab" style="left:501.4px;top:548.4px;width:0.8px;height:1.6px;background:#5a9fe0"></div>
<div class="ab" style="left:512.0px;top:548.4px;width:0.8px;height:1.6px;background:#e0a24a"></div>
<div class="ab" style="left:522.3px;top:548.4px;width:0.8px;height:1.6px;background:#5a9fe0"></div>
<div class="ab" style="left:532.9px;top:548.4px;width:0.8px;height:1.6px;background:#e0a24a"></div>
<div class="ab" style="left:543.5px;top:548.4px;width:0.8px;height:1.6px;background:#5a9fe0"></div>
<div class="ab" style="left:553.9px;top:548.4px;width:0.8px;height:1.6px;background:#5a9fe0"></div>
<div class="ab" style="left:564.5px;top:548.4px;width:0.8px;height:1.6px;background:#5a9fe0"></div>
<div class="ab" style="left:575.1px;top:548.4px;width:0.8px;height:1.6px;background:#5a9fe0"></div>
<div class="ab" style="left:585.4px;top:548.4px;width:0.8px;height:1.6px;background:#5a9fe0"></div>
<div class="ab" style="left:596.5px;top:548.4px;width:0.8px;height:1.6px;background:#5a9fe0"></div>
<div class="ab" style="left:606.6px;top:548.4px;width:0.8px;height:1.6px;background:#5a9fe0"></div>
<svg class="ab" style="left:64.5px;top:538.5px" width="8" height="8" viewBox="0 0 8 8"><rect x="0.5" y="1" width="6.5" height="6" fill="#e6e6e6" stroke="#b9b9b9" stroke-width="0.5"/><path d="M4 6L7.5 2.5L8 3.2L4.8 6.5Z" fill="#e9a23b"/></svg>
<svg class="ab" style="left:75.0px;top:538.5px" width="8" height="8" viewBox="0 0 8 8"><path d="M1 2L2.5 0.8H7.5V6L6 7.2H1Z" fill="#2b83d6"/><path d="M1 2H6V7.2" fill="none" stroke="#8cc0f0" stroke-width="0.5"/></svg>
<svg class="ab" style="left:85.6px;top:538.5px" width="8" height="8" viewBox="0 0 8 8"><rect x="1" y="1.5" width="6" height="5.5" fill="#e8e8e8" stroke="#aaa" stroke-width="0.5"/><circle cx="6" cy="2.2" r="1.8" fill="#f0a030"/></svg>
<svg class="ab" style="left:96.1px;top:538.5px" width="8" height="8" viewBox="0 0 8 8"><rect x="0.5" y="1" width="6.5" height="6" fill="#e6e6e6" stroke="#b9b9b9" stroke-width="0.5"/><path d="M4 6L7.5 2.5L8 3.2L4.8 6.5Z" fill="#e9a23b"/></svg>
<svg class="ab" style="left:106.6px;top:538.5px" width="8" height="8" viewBox="0 0 8 8"><path d="M1 2L2.5 0.8H7.5V6L6 7.2H1Z" fill="#2b83d6"/><path d="M1 2H6V7.2" fill="none" stroke="#8cc0f0" stroke-width="0.5"/></svg>
<svg class="ab" style="left:117.2px;top:538.5px" width="8" height="8" viewBox="0 0 8 8"><rect x="0.5" y="1" width="6.5" height="6" fill="#e6e6e6" stroke="#b9b9b9" stroke-width="0.5"/><path d="M4 6L7.5 2.5L8 3.2L4.8 6.5Z" fill="#e9a23b"/></svg>
<svg class="ab" style="left:127.7px;top:538.5px" width="8" height="8" viewBox="0 0 8 8"><path d="M1 2L2.5 0.8H7.5V6L6 7.2H1Z" fill="#2b83d6"/><path d="M1 2H6V7.2" fill="none" stroke="#8cc0f0" stroke-width="0.5"/></svg>
<svg class="ab" style="left:138.2px;top:538.5px" width="8" height="8" viewBox="0 0 8 8"><path d="M1.5 0.8H5L7 2.8V7.2H1.5Z" fill="#f4f4f4" stroke="#7d8da0" stroke-width="0.6"/><rect x="3" y="3.5" width="2.5" height="2.5" fill="#9ab"/></svg>
<svg class="ab" style="left:148.7px;top:538.5px" width="8" height="8" viewBox="0 0 8 8"><circle cx="4" cy="4" r="2.6" fill="none" stroke="#2b83d6" stroke-width="1.1" stroke-dasharray="5 1.5"/></svg>
<svg class="ab" style="left:159.3px;top:538.5px" width="8" height="8" viewBox="0 0 8 8"><rect x="0.5" y="1" width="6.5" height="6" fill="#e6e6e6" stroke="#b9b9b9" stroke-width="0.5"/><path d="M4 6L7.5 2.5L8 3.2L4.8 6.5Z" fill="#e9a23b"/></svg>
<svg class="ab" style="left:169.8px;top:538.5px" width="8" height="8" viewBox="0 0 8 8"><path d="M1.2 1H7V4.2H2.2V7.4H1.2Z" fill="#2b83d6"/><rect x="2.4" y="2" width="3.6" height="1.4" fill="#e8f1fa"/></svg>
<svg class="ab" style="left:180.3px;top:538.5px" width="8" height="8" viewBox="0 0 8 8"><path d="M1 2L2.5 0.8H7.5V6L6 7.2H1Z" fill="#2b83d6"/><path d="M1 2H6V7.2" fill="none" stroke="#8cc0f0" stroke-width="0.5"/></svg>
<svg class="ab" style="left:190.9px;top:538.5px" width="8" height="8" viewBox="0 0 8 8"><rect x="0.5" y="1" width="6.5" height="6" fill="#e6e6e6" stroke="#b9b9b9" stroke-width="0.5"/><path d="M4 6L7.5 2.5L8 3.2L4.8 6.5Z" fill="#e9a23b"/></svg>
<svg class="ab" style="left:201.4px;top:538.5px" width="8" height="8" viewBox="0 0 8 8"><path d="M1 2L2.5 0.8H7.5V6L6 7.2H1Z" fill="#2b83d6"/><path d="M1 2H6V7.2" fill="none" stroke="#8cc0f0" stroke-width="0.5"/></svg>
<svg class="ab" style="left:211.9px;top:538.5px" width="8" height="8" viewBox="0 0 8 8"><path d="M1 2L2.5 0.8H7.5V6L6 7.2H1Z" fill="#2b83d6"/><path d="M1 2H6V7.2" fill="none" stroke="#8cc0f0" stroke-width="0.5"/></svg>
<svg class="ab" style="left:222.4px;top:538.5px" width="8" height="8" viewBox="0 0 8 8"><path d="M1 2.5L3.2 1V6L1 7.5Z" fill="#e99a3c"/><path d="M3.6 1.5L5.6 0.5V6L3.6 7Z" fill="#4aa564"/><path d="M6 2.5L7.6 1.5V6.5L6 7.5Z" fill="#e99a3c"/></svg>
<svg class="ab" style="left:233.0px;top:538.5px" width="8" height="8" viewBox="0 0 8 8"><rect x="0.5" y="1" width="6.5" height="6" fill="#e6e6e6" stroke="#b9b9b9" stroke-width="0.5"/><path d="M4 6L7.5 2.5L8 3.2L4.8 6.5Z" fill="#e9a23b"/></svg>
<svg class="ab" style="left:243.5px;top:538.5px" width="8" height="8" viewBox="0 0 8 8"><rect x="1" y="1.5" width="6" height="5.5" fill="#e8e8e8" stroke="#aaa" stroke-width="0.5"/><circle cx="6" cy="2.2" r="1.8" fill="#f0a030"/></svg>
<svg class="ab" style="left:254.7px;top:538.5px" width="8" height="8" viewBox="0 0 8 8"><rect x="1" y="3.6" width="1.3" height="1.3" fill="#777"/><rect x="3.3" y="3.6" width="1.3" height="1.3" fill="#777"/><rect x="5.6" y="3.6" width="1.3" height="1.3" fill="#777"/></svg>
<svg class="ab" style="left:264.8px;top:538.5px" width="8" height="8" viewBox="0 0 8 8"><path d="M2 1.5V5Q2 6.8 4 6.8Q6 6.8 6 5V1.5" fill="#ddd" stroke="#a5a5a5" stroke-width="0.7"/><path d="M4 3V7.5" stroke="#a5a5a5" stroke-width="0.7"/></svg>
<svg class="ab" style="left:275.7px;top:538.5px" width="8" height="8" viewBox="0 0 8 8"><path d="M1.2 1H7V4.2H2.2V7.4H1.2Z" fill="#2b83d6"/><rect x="2.4" y="2" width="3.6" height="1.4" fill="#e8f1fa"/></svg>
<svg class="ab" style="left:286.3px;top:538.5px" width="8" height="8" viewBox="0 0 8 8"><rect x="1" y="3.6" width="1.3" height="1.3" fill="#777"/><rect x="3.3" y="3.6" width="1.3" height="1.3" fill="#777"/><rect x="5.6" y="3.6" width="1.3" height="1.3" fill="#777"/></svg>
<svg class="ab" style="left:297.0px;top:538.5px" width="8" height="8" viewBox="0 0 8 8"><path d="M2 1.5V5Q2 6.8 4 6.8Q6 6.8 6 5V1.5" fill="#ddd" stroke="#a5a5a5" stroke-width="0.7"/><path d="M4 3V7.5" stroke="#a5a5a5" stroke-width="0.7"/></svg>
<svg class="ab" style="left:307.2px;top:538.5px" width="8" height="8" viewBox="0 0 8 8"><rect x="1" y="3.6" width="1.3" height="1.3" fill="#777"/><rect x="3.3" y="3.6" width="1.3" height="1.3" fill="#777"/><rect x="5.6" y="3.6" width="1.3" height="1.3" fill="#777"/></svg>
<svg class="ab" style="left:318.0px;top:538.5px" width="8" height="8" viewBox="0 0 8 8"><path d="M2 1.5V5Q2 6.8 4 6.8Q6 6.8 6 5V1.5" fill="#ddd" stroke="#a5a5a5" stroke-width="0.7"/><path d="M4 3V7.5" stroke="#a5a5a5" stroke-width="0.7"/></svg>
<svg class="ab" style="left:328.6px;top:538.5px" width="8" height="8" viewBox="0 0 8 8"><rect x="1" y="3.6" width="1.3" height="1.3" fill="#777"/><rect x="3.3" y="3.6" width="1.3" height="1.3" fill="#777"/><rect x="5.6" y="3.6" width="1.3" height="1.3" fill="#777"/></svg>
<svg class="ab" style="left:339.1px;top:538.5px" width="8" height="8" viewBox="0 0 8 8"><path d="M2 1.5V5Q2 6.8 4 6.8Q6 6.8 6 5V1.5" fill="#ddd" stroke="#a5a5a5" stroke-width="0.7"/><path d="M4 3V7.5" stroke="#a5a5a5" stroke-width="0.7"/></svg>
<svg class="ab" style="left:349.5px;top:538.5px" width="8" height="8" viewBox="0 0 8 8"><path d="M4 0.5V7.5M0.5 4H7.5" stroke="#333" stroke-width="0.9"/><path d="M4 0L5.2 1.6H2.8ZM4 8L5.2 6.4H2.8ZM0 4L1.6 2.8V5.2ZM8 4L6.4 2.8V5.2Z" fill="#333"/></svg>
<svg class="ab" style="left:360.0px;top:538.5px" width="8" height="8" viewBox="0 0 8 8"><rect x="1" y="1.5" width="6" height="5.5" fill="#e8e8e8" stroke="#aaa" stroke-width="0.5"/><circle cx="6" cy="2.2" r="1.8" fill="#f0a030"/></svg>
<svg class="ab" style="left:371.0px;top:538.5px" width="8" height="8" viewBox="0 0 8 8"><path d="M1.2 1H7V4.2H2.2V7.4H1.2Z" fill="#2b83d6"/><rect x="2.4" y="2" width="3.6" height="1.4" fill="#e8f1fa"/></svg>
<svg class="ab" style="left:381.5px;top:538.5px" width="8" height="8" viewBox="0 0 8 8"><path d="M2 1.5V5Q2 6.8 4 6.8Q6 6.8 6 5V1.5" fill="#ddd" stroke="#a5a5a5" stroke-width="0.7"/><path d="M4 3V7.5" stroke="#a5a5a5" stroke-width="0.7"/></svg>
<svg class="ab" style="left:392.0px;top:538.5px" width="8" height="8" viewBox="0 0 8 8"><path d="M2 1.5V5Q2 6.8 4 6.8Q6 6.8 6 5V1.5" fill="#ddd" stroke="#a5a5a5" stroke-width="0.7"/><path d="M4 3V7.5" stroke="#a5a5a5" stroke-width="0.7"/></svg>
<svg class="ab" style="left:403.0px;top:538.5px" width="8" height="8" viewBox="0 0 8 8"><path d="M2 1.5V5Q2 6.8 4 6.8Q6 6.8 6 5V1.5" fill="#ddd" stroke="#a5a5a5" stroke-width="0.7"/><path d="M4 3V7.5" stroke="#a5a5a5" stroke-width="0.7"/></svg>
<svg class="ab" style="left:413.6px;top:538.5px" width="8" height="8" viewBox="0 0 8 8"><path d="M1.5 6.5L6 1.2L7 2L2.5 7.2Z" fill="#3f9f55"/></svg>
<svg class="ab" style="left:424.0px;top:538.5px" width="8" height="8" viewBox="0 0 8 8"><path d="M1 2.5L3.2 1V6L1 7.5Z" fill="#e99a3c"/><path d="M3.6 1.5L5.6 0.5V6L3.6 7Z" fill="#4aa564"/><path d="M6 2.5L7.6 1.5V6.5L6 7.5Z" fill="#e99a3c"/></svg>
<svg class="ab" style="left:434.5px;top:538.5px" width="8" height="8" viewBox="0 0 8 8"><rect x="0.5" y="1" width="6.5" height="6" fill="#e6e6e6" stroke="#b9b9b9" stroke-width="0.5"/><path d="M4 6L7.5 2.5L8 3.2L4.8 6.5Z" fill="#e9a23b"/></svg>
<svg class="ab" style="left:444.6px;top:538.5px" width="8" height="8" viewBox="0 0 8 8"><path d="M1 2L2.5 0.8H7.5V6L6 7.2H1Z" fill="#2b83d6"/><path d="M1 2H6V7.2" fill="none" stroke="#8cc0f0" stroke-width="0.5"/></svg>
<svg class="ab" style="left:455.5px;top:538.5px" width="8" height="8" viewBox="0 0 8 8"><rect x="1" y="3.6" width="1.3" height="1.3" fill="#777"/><rect x="3.3" y="3.6" width="1.3" height="1.3" fill="#777"/><rect x="5.6" y="3.6" width="1.3" height="1.3" fill="#777"/></svg>
<svg class="ab" style="left:466.0px;top:538.5px" width="8" height="8" viewBox="0 0 8 8"><path d="M2 1.5V5Q2 6.8 4 6.8Q6 6.8 6 5V1.5" fill="#ddd" stroke="#a5a5a5" stroke-width="0.7"/><path d="M4 3V7.5" stroke="#a5a5a5" stroke-width="0.7"/></svg>
<svg class="ab" style="left:476.5px;top:538.5px" width="8" height="8" viewBox="0 0 8 8"><rect x="1" y="3.6" width="1.3" height="1.3" fill="#777"/><rect x="3.3" y="3.6" width="1.3" height="1.3" fill="#777"/><rect x="5.6" y="3.6" width="1.3" height="1.3" fill="#777"/></svg>
<svg class="ab" style="left:487.0px;top:538.5px" width="8" height="8" viewBox="0 0 8 8"><path d="M2 1.5V5Q2 6.8 4 6.8Q6 6.8 6 5V1.5" fill="#ddd" stroke="#a5a5a5" stroke-width="0.7"/><path d="M4 3V7.5" stroke="#a5a5a5" stroke-width="0.7"/></svg>
<svg class="ab" style="left:497.8px;top:538.5px" width="8" height="8" viewBox="0 0 8 8"><path d="M1.2 1H7V4.2H2.2V7.4H1.2Z" fill="#2b83d6"/><rect x="2.4" y="2" width="3.6" height="1.4" fill="#e8f1fa"/></svg>
<svg class="ab" style="left:508.4px;top:538.5px" width="8" height="8" viewBox="0 0 8 8"><rect x="0.5" y="1" width="6.5" height="6" fill="#e6e6e6" stroke="#b9b9b9" stroke-width="0.5"/><path d="M4 6L7.5 2.5L8 3.2L4.8 6.5Z" fill="#e9a23b"/></svg>
<svg class="ab" style="left:518.7px;top:538.5px" width="8" height="8" viewBox="0 0 8 8"><path d="M1 2L2.5 0.8H7.5V6L6 7.2H1Z" fill="#2b83d6"/><path d="M1 2H6V7.2" fill="none" stroke="#8cc0f0" stroke-width="0.5"/></svg>
<svg class="ab" style="left:529.3px;top:538.5px" width="8" height="8" viewBox="0 0 8 8"><rect x="0.5" y="1" width="6.5" height="6" fill="#e6e6e6" stroke="#b9b9b9" stroke-width="0.5"/><path d="M4 6L7.5 2.5L8 3.2L4.8 6.5Z" fill="#e9a23b"/></svg>
<svg class="ab" style="left:539.9px;top:538.5px" width="8" height="8" viewBox="0 0 8 8"><path d="M1 2L2.5 0.8H7.5V6L6 7.2H1Z" fill="#2b83d6"/><path d="M1 2H6V7.2" fill="none" stroke="#8cc0f0" stroke-width="0.5"/></svg>
<svg class="ab" style="left:550.3px;top:538.5px" width="8" height="8" viewBox="0 0 8 8"><path d="M1.5 0.8H5L7 2.8V7.2H1.5Z" fill="#f4f4f4" stroke="#7d8da0" stroke-width="0.6"/><rect x="3" y="3.5" width="2.5" height="2.5" fill="#9ab"/></svg>
<svg class="ab" style="left:560.9px;top:538.5px" width="8" height="8" viewBox="0 0 8 8"><path d="M1.2 1H7V4.2H2.2V7.4H1.2Z" fill="#2b83d6"/><rect x="2.4" y="2" width="3.6" height="1.4" fill="#e8f1fa"/></svg>
<svg class="ab" style="left:571.5px;top:538.5px" width="8" height="8" viewBox="0 0 8 8"><path d="M1 2L2.5 0.8H7.5V6L6 7.2H1Z" fill="#2b83d6"/><path d="M1 2H6V7.2" fill="none" stroke="#8cc0f0" stroke-width="0.5"/></svg>
<svg class="ab" style="left:581.8px;top:538.5px" width="8" height="8" viewBox="0 0 8 8"><path d="M1 2L2.5 0.8H7.5V6L6 7.2H1Z" fill="#2b83d6"/><path d="M1 2H6V7.2" fill="none" stroke="#8cc0f0" stroke-width="0.5"/></svg>
<svg class="ab" style="left:592.9px;top:538.5px" width="8" height="8" viewBox="0 0 8 8"><path d="M1.2 1H7V4.2H2.2V7.4H1.2Z" fill="#2b83d6"/><rect x="2.4" y="2" width="3.6" height="1.4" fill="#e8f1fa"/></svg>
<svg class="ab" style="left:603.0px;top:538.5px" width="8" height="8" viewBox="0 0 8 8"><path d="M1 2L2.5 0.8H7.5V6L6 7.2H1Z" fill="#2b83d6"/><path d="M1 2H6V7.2" fill="none" stroke="#8cc0f0" stroke-width="0.5"/></svg>
<svg class="ab" style="left:620.5px;top:541px" width="8" height="8" viewBox="0 0 8 8"><circle cx="4" cy="4" r="2.2" fill="none" stroke="#444" stroke-width="1.6"/><circle cx="4" cy="4" r="3.2" fill="none" stroke="#444" stroke-width="0.9" stroke-dasharray="1.2 1.3"/></svg>
<!-- borders -->
<div class="ab" style="left:0;top:1px;width:1px;height:554px;background:#9a9a9a"></div>
<div class="ab" style="left:0;top:554px;width:632px;height:1px;background:#555"></div>
<div class="ab" style="left:632.3px;top:14px;width:1px;height:540px;background:#b9b9b9"></div>
</body></html>
